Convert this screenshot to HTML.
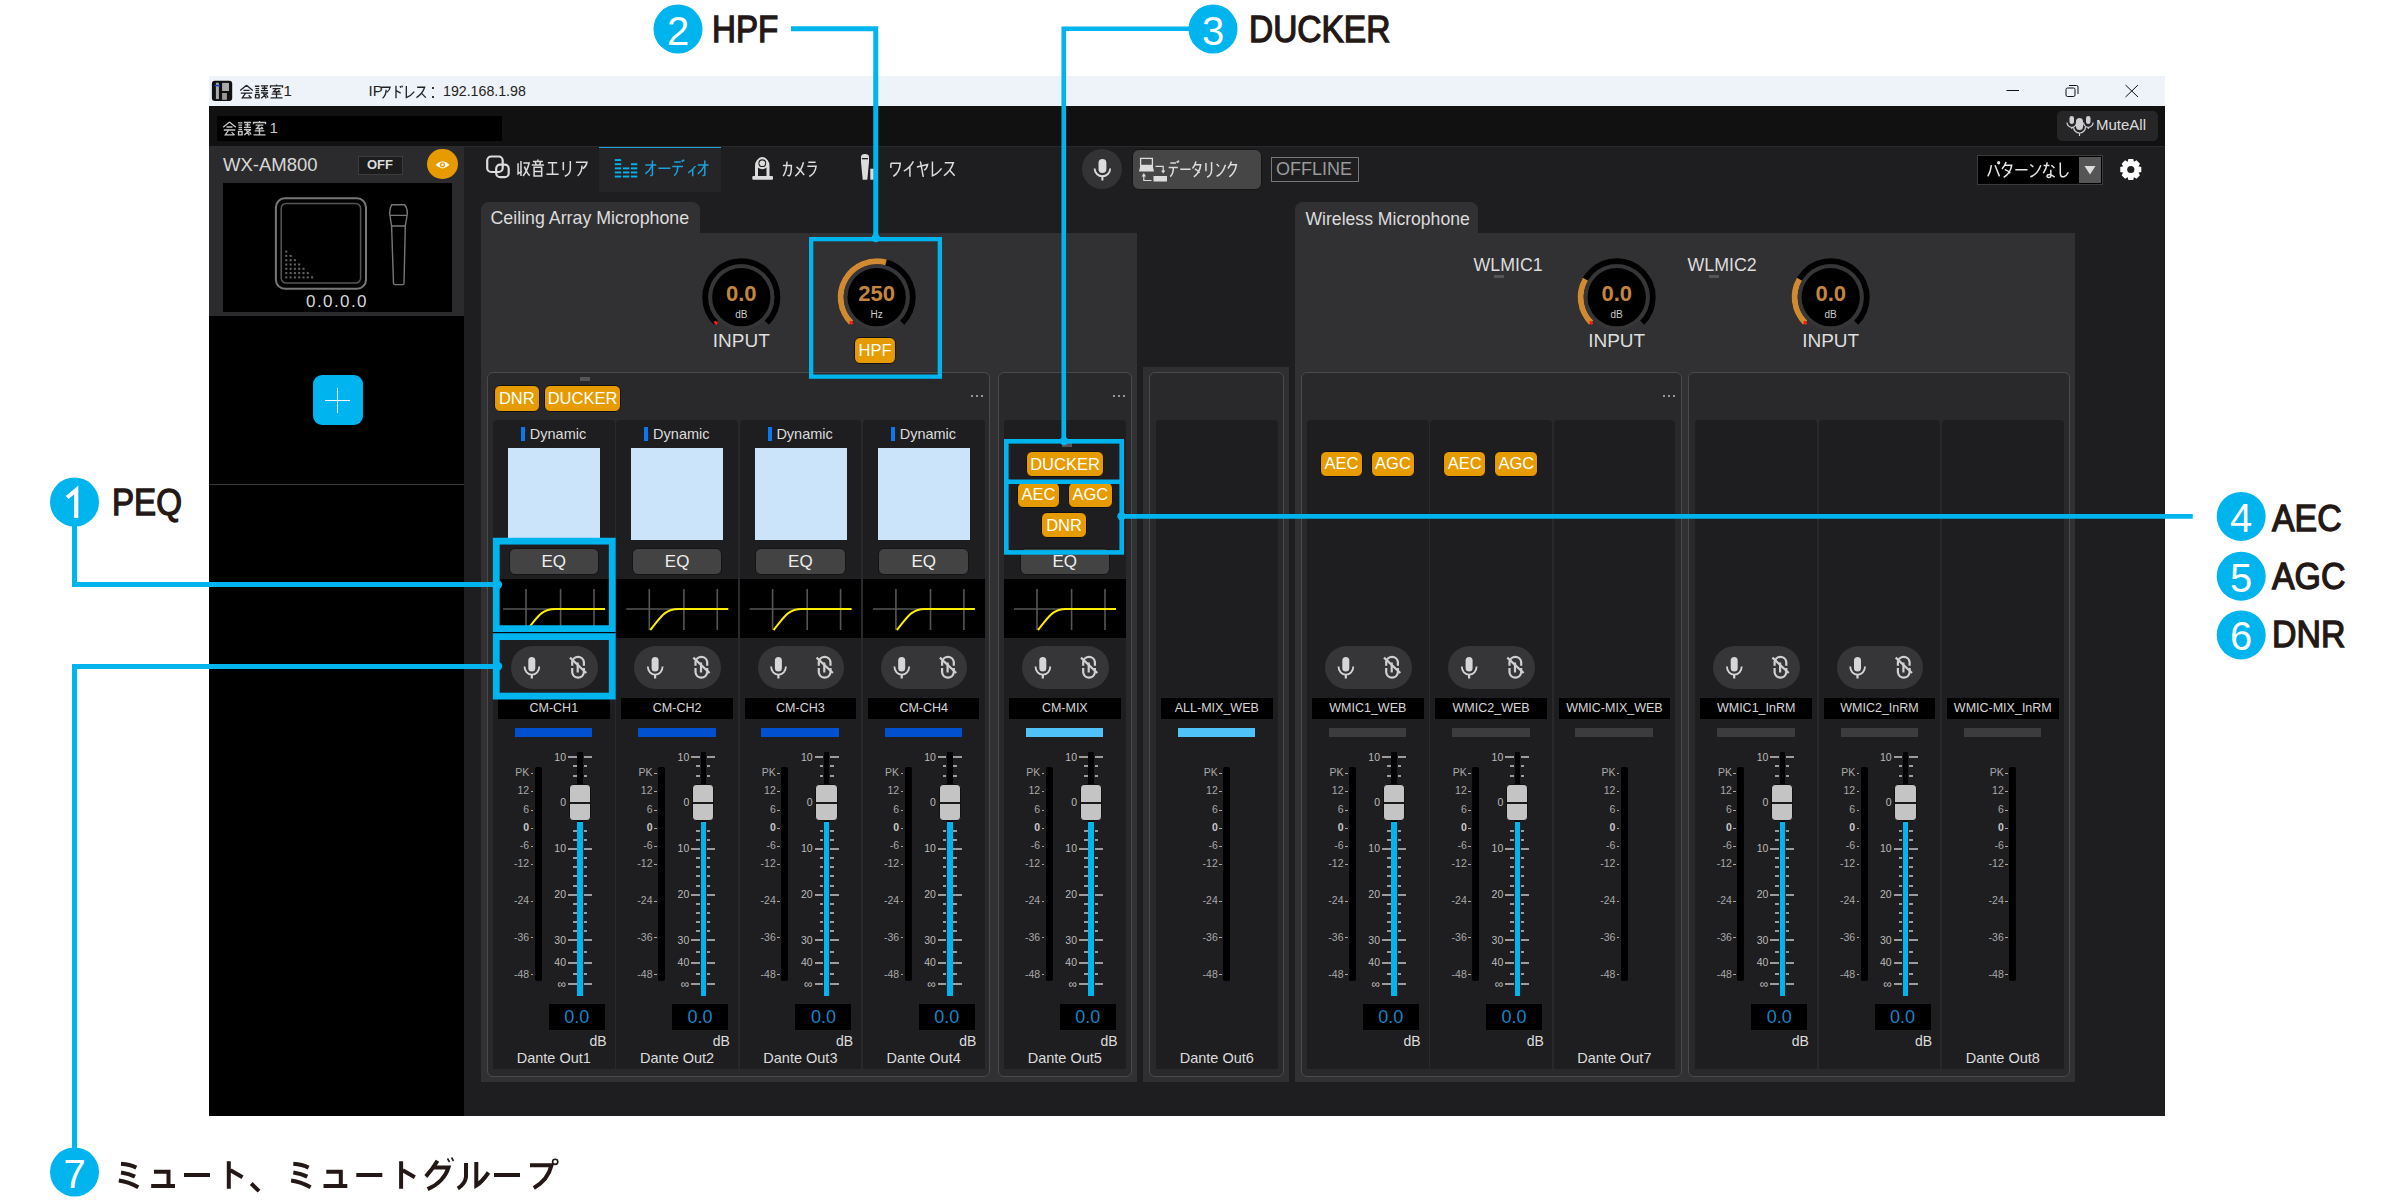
<!DOCTYPE html><html><head><meta charset="utf-8"><title>mixer</title><style>
*{margin:0;padding:0;box-sizing:border-box}
html,body{width:2400px;height:1200px;overflow:hidden;background:#fff}
body{position:relative;font-family:"Liberation Sans",sans-serif}
div{position:absolute}
.t{white-space:nowrap}
svg{position:absolute;left:0;top:0;overflow:visible}
.ob{background:#e69b00;border:1px solid #111;border-radius:6px;color:#fff;text-align:center;font-size:16.5px}
</style></head><body>
<div style="left:209px;top:76px;width:1956px;height:30px;background:#eef2f9"></div>
<div style="left:209px;top:106px;width:1956px;height:40px;background:#111112"></div>
<div style="left:217px;top:115.5px;width:285px;height:25.5px;background:#000"></div>
<div style="left:209px;top:146px;width:255px;height:970px;background:#000"></div>
<div style="left:209px;top:146px;width:255px;height:170px;background:#2b2b2d"></div>
<div style="left:223px;top:182.5px;width:229px;height:129.5px;background:#000"></div>
<div style="left:209px;top:484px;width:255px;height:1px;background:#3a3a3a"></div>
<div style="left:464px;top:146px;width:1701px;height:970px;background:#1e1e20"></div>
<div style="left:464px;top:146px;width:1701px;height:1px;background:#29292b"></div>
<svg width="2400" height="1200" viewBox="0 0 2400 1200"><g fill="none" stroke="#222" stroke-width="1.3" stroke-linecap="butt" stroke-linejoin="miter"><path transform="translate(239.00 84.50) scale(0.1500 0.1450)" d="M50 6 L8 42 M50 6 L92 42 M30 40 H70 M12 60 H88 M44 60 L22 92 H82 M64 74 L84 94" vector-effect="non-scaling-stroke"/><path transform="translate(254.00 84.50) scale(0.1500 0.1450)" d="M6 12 H36 M10 28 H34 M10 42 H34 M10 56 H34 M10 70 H34 V92 H10 Z M46 10 H94 M52 26 H88 M46 42 H94 M70 10 V46 M46 58 H94 M58 52 L82 96 M90 58 L48 94 M84 74 L94 90" vector-effect="non-scaling-stroke"/><path transform="translate(269.00 84.50) scale(0.1500 0.1450)" d="M50 0 V10 M10 22 V10 H90 V22 M24 28 H76 M52 28 L30 50 H72 M62 40 L74 52 M18 66 H82 M50 54 V90 M10 92 H90" vector-effect="non-scaling-stroke"/></g></svg>
<div class="t" style="left:283.5px;top:82.42px;font-size:15px;line-height:18.75px;color:#222;">1</div>
<div class="t" style="left:368.6px;top:82.42px;font-size:15px;line-height:18.75px;color:#222;">IP</div>
<svg width="2400" height="1200" viewBox="0 0 2400 1200"><g fill="none" stroke="#222" stroke-width="1.3" stroke-linecap="butt" stroke-linejoin="miter"><path transform="translate(380.00 85.00) scale(0.1175 0.1400)" d="M10 16 H86 Q82 38 58 52 M52 34 Q52 74 22 94" vector-effect="non-scaling-stroke"/><path transform="translate(391.75 85.00) scale(0.1175 0.1400)" d="M36 6 V94 M38 40 L76 58 M70 8 L78 20 M84 4 L92 16" vector-effect="non-scaling-stroke"/><path transform="translate(403.50 85.00) scale(0.1175 0.1400)" d="M24 8 V90 Q62 80 92 48" vector-effect="non-scaling-stroke"/><path transform="translate(415.25 85.00) scale(0.1175 0.1400)" d="M16 16 H80 Q62 62 10 90 M50 56 L90 90" vector-effect="non-scaling-stroke"/></g></svg>
<div style="left:431.5px;top:87px;width:2.2px;height:2.2px;background:#333"></div>
<div style="left:431.5px;top:95.5px;width:2.2px;height:2.2px;background:#333"></div>
<div class="t" style="left:443px;top:82.92px;font-size:14.2px;line-height:17.75px;color:#222;">192.168.1.98</div>
<svg width="2400" height="1200" viewBox="0 0 2400 1200"><g fill="none" stroke="#c8c8c8" stroke-width="1.3" stroke-linecap="butt" stroke-linejoin="miter"><path transform="translate(222.00 121.00) scale(0.1500 0.1500)" d="M50 6 L8 42 M50 6 L92 42 M30 40 H70 M12 60 H88 M44 60 L22 92 H82 M64 74 L84 94" vector-effect="non-scaling-stroke"/><path transform="translate(237.00 121.00) scale(0.1500 0.1500)" d="M6 12 H36 M10 28 H34 M10 42 H34 M10 56 H34 M10 70 H34 V92 H10 Z M46 10 H94 M52 26 H88 M46 42 H94 M70 10 V46 M46 58 H94 M58 52 L82 96 M90 58 L48 94 M84 74 L94 90" vector-effect="non-scaling-stroke"/><path transform="translate(252.00 121.00) scale(0.1500 0.1500)" d="M50 0 V10 M10 22 V10 H90 V22 M24 28 H76 M52 28 L30 50 H72 M62 40 L74 52 M18 66 H82 M50 54 V90 M10 92 H90" vector-effect="non-scaling-stroke"/></g></svg>
<div class="t" style="left:269.5px;top:119.12px;font-size:15px;line-height:18.75px;color:#c8c8c8;">1</div>
<svg width="2400" height="1200" viewBox="0 0 2400 1200"><rect x="211.9" y="80.8" width="20.3" height="20.2" rx="3" fill="#111"/><rect x="215.9" y="82.8" width="3" height="16.3" fill="#aaa"/><rect x="214.5" y="84.8" width="5.5" height="1.5" fill="#1040c0"/><rect x="222.1" y="82.9" width="6.9" height="8.1" fill="#aaa"/><rect x="222.1" y="93" width="4.8" height="6.8" fill="#999"/></svg>
<svg width="2400" height="1200" viewBox="0 0 2400 1200"><g fill="none" stroke="#111" stroke-width="1"><path d="M2006.5 90.5 H2019"/><rect x="2066" y="88" width="9" height="8.5" rx="1.5"/><path d="M2069 85.5 H2076.5 Q2078 85.5 2078 87 V94"/><path d="M2125.5 85 L2138 97 M2138 85 L2125.5 97"/></g></svg>
<div class="t" style="left:223px;top:153.44px;font-size:18.5px;line-height:23.12px;color:#d8d8d8;">WX-AM800</div>
<div style="left:357.5px;top:155.5px;width:45px;height:19.5px;background:#1c1c1c;border:1px solid #3c3c3c"><div class="t" style="left:0px;top:0.88px;font-size:13px;line-height:16.25px;color:#ddd;font-weight:bold;width:43px;text-align:center">OFF</div></div>
<div style="left:427.4px;top:148.9px;width:30.6px;height:30.6px;background:#e69b00;border-radius:50%"></div>
<div class="t" style="left:277.00px;top:291.38px;width:120px;text-align:center;font-size:17px;line-height:21.25px;color:#d8d8d8;letter-spacing:1.4px">0.0.0.0</div>
<svg width="2400" height="1200" viewBox="0 0 2400 1200"><path d="M435.6 164.8 Q442.5 157.5 449.5 164.8 Q442.5 172 435.6 164.8 Z" fill="#fff"/><circle cx="442.5" cy="164.8" r="2.6" fill="#e69b00"/><circle cx="442.5" cy="164.8" r="1.2" fill="#fff"/><rect x="275.9" y="198.3" width="90.1" height="90.5" rx="9" fill="none" stroke="#777" stroke-width="2"/><rect x="281.2" y="203.4" width="79.4" height="79.7" rx="5" fill="none" stroke="#555" stroke-width="1.5"/><rect x="285.30" y="250.60" width="2" height="2" fill="#666"/><rect x="285.30" y="254.90" width="2" height="2" fill="#666"/><rect x="289.60" y="254.90" width="2" height="2" fill="#666"/><rect x="285.30" y="259.20" width="2" height="2" fill="#666"/><rect x="289.60" y="259.20" width="2" height="2" fill="#666"/><rect x="293.90" y="259.20" width="2" height="2" fill="#666"/><rect x="285.30" y="263.50" width="2" height="2" fill="#666"/><rect x="289.60" y="263.50" width="2" height="2" fill="#666"/><rect x="293.90" y="263.50" width="2" height="2" fill="#666"/><rect x="298.20" y="263.50" width="2" height="2" fill="#666"/><rect x="285.30" y="267.80" width="2" height="2" fill="#666"/><rect x="289.60" y="267.80" width="2" height="2" fill="#666"/><rect x="293.90" y="267.80" width="2" height="2" fill="#666"/><rect x="298.20" y="267.80" width="2" height="2" fill="#666"/><rect x="302.50" y="267.80" width="2" height="2" fill="#666"/><rect x="285.30" y="272.10" width="2" height="2" fill="#666"/><rect x="289.60" y="272.10" width="2" height="2" fill="#666"/><rect x="293.90" y="272.10" width="2" height="2" fill="#666"/><rect x="298.20" y="272.10" width="2" height="2" fill="#666"/><rect x="302.50" y="272.10" width="2" height="2" fill="#666"/><rect x="306.80" y="272.10" width="2" height="2" fill="#666"/><rect x="285.30" y="276.40" width="2" height="2" fill="#666"/><rect x="289.60" y="276.40" width="2" height="2" fill="#666"/><rect x="293.90" y="276.40" width="2" height="2" fill="#666"/><rect x="298.20" y="276.40" width="2" height="2" fill="#666"/><rect x="302.50" y="276.40" width="2" height="2" fill="#666"/><rect x="306.80" y="276.40" width="2" height="2" fill="#666"/><rect x="311.10" y="276.40" width="2" height="2" fill="#666"/><path d="M391.8 204.7 H404.7 Q407.5 208 407.3 214 L405.3 226 L404 283.5 Q404 284.6 402.6 284.6 H394.9 Q393.5 284.6 393.5 283.5 L391.6 226 L389.7 214 Q389.5 208 391.8 204.7 Z M390.5 215.4 H406.5 M391.6 226 H405.3" fill="none" stroke="#777" stroke-width="1.4"/></svg>
<div style="left:312.5px;top:375px;width:50px;height:50px;background:#00b4f0;border-radius:9px"></div>
<div style="left:337px;top:387.5px;width:1.2px;height:25px;background:#fff"></div>
<div style="left:325px;top:399.5px;width:25px;height:1.2px;background:#fff"></div>
<div style="left:2056.7px;top:110.7px;width:101.3px;height:30px;background:#262628;border-radius:5px"></div>
<div class="t" style="left:2096px;top:116.12px;font-size:15px;line-height:18.75px;color:#ddd;">MuteAll</div>
<div style="left:598.7px;top:146.5px;width:122px;height:45.5px;background:#252527;border-top:1px solid #1a9fdc"></div>
<svg width="2400" height="1200" viewBox="0 0 2400 1200"><g fill="none" stroke="#dcdcdc" stroke-width="1.5" stroke-linecap="butt" stroke-linejoin="miter"><path transform="translate(516.00 159.50) scale(0.1460 0.1750)" d="M14 22 V82 L40 66 M34 8 V94 M50 20 H90 Q76 66 48 94 M58 40 Q72 76 94 92" vector-effect="non-scaling-stroke"/><path transform="translate(530.60 159.50) scale(0.1460 0.1750)" d="M50 0 V10 M16 12 H84 M32 16 L38 30 M68 16 L62 30 M8 32 H92 M24 44 V94 H76 V44 Z M24 68 H76" vector-effect="non-scaling-stroke"/><path transform="translate(545.20 159.50) scale(0.1460 0.1750)" d="M18 18 H82 M50 18 V84 M8 84 H92" vector-effect="non-scaling-stroke"/><path transform="translate(559.80 159.50) scale(0.1460 0.1750)" d="M24 14 V62 M72 8 V56 Q70 86 34 96" vector-effect="non-scaling-stroke"/><path transform="translate(574.40 159.50) scale(0.1460 0.1750)" d="M10 16 H86 Q82 38 58 52 M52 34 Q52 74 22 94" vector-effect="non-scaling-stroke"/></g></svg>
<svg width="2400" height="1200" viewBox="0 0 2400 1200"><g fill="none" stroke="#1ea0dc" stroke-width="1.5" stroke-linecap="butt" stroke-linejoin="miter"><path transform="translate(644.00 159.50) scale(0.1361 0.1750)" d="M10 32 H90 M62 6 V84 Q62 94 46 90 M60 34 Q42 64 10 82" vector-effect="non-scaling-stroke"/><path transform="translate(657.61 159.50) scale(0.1361 0.1750)" d="M6 50 H94" vector-effect="non-scaling-stroke"/><path transform="translate(671.22 159.50) scale(0.1361 0.1750)" d="M22 14 H70 M8 40 H86 M48 40 Q48 76 22 92 M78 4 L84 14 M88 0 L94 10" vector-effect="non-scaling-stroke"/><path transform="translate(684.82 159.50) scale(0.1361 0.1750)" d="M78 38 Q58 62 24 76 M58 56 V96" vector-effect="non-scaling-stroke"/><path transform="translate(696.39 159.50) scale(0.1361 0.1750)" d="M10 32 H90 M62 6 V84 Q62 94 46 90 M60 34 Q42 64 10 82" vector-effect="non-scaling-stroke"/></g></svg>
<svg width="2400" height="1200" viewBox="0 0 2400 1200"><g fill="none" stroke="#dcdcdc" stroke-width="1.5" stroke-linecap="butt" stroke-linejoin="miter"><path transform="translate(781.70 160.50) scale(0.1210 0.1700)" d="M10 30 H80 Q80 82 64 90 Q56 90 48 86 M44 6 Q42 62 12 92" vector-effect="non-scaling-stroke"/><path transform="translate(793.80 160.50) scale(0.1210 0.1700)" d="M80 10 Q60 65 12 92 M22 38 Q60 58 86 86" vector-effect="non-scaling-stroke"/><path transform="translate(805.90 160.50) scale(0.1210 0.1700)" d="M20 10 H80 M12 34 H84 Q78 76 28 94" vector-effect="non-scaling-stroke"/></g></svg>
<svg width="2400" height="1200" viewBox="0 0 2400 1200"><g fill="none" stroke="#dcdcdc" stroke-width="1.5" stroke-linecap="butt" stroke-linejoin="miter"><path transform="translate(889.00 160.00) scale(0.1340 0.1750)" d="M14 18 V46 M14 18 H84 Q80 70 32 94" vector-effect="non-scaling-stroke"/><path transform="translate(902.40 160.00) scale(0.1340 0.1750)" d="M82 8 Q58 44 10 64 M56 40 V96" vector-effect="non-scaling-stroke"/><path transform="translate(915.80 160.00) scale(0.1340 0.1750)" d="M8 40 L88 26 Q82 50 62 58 M34 8 L56 96" vector-effect="non-scaling-stroke"/><path transform="translate(929.20 160.00) scale(0.1340 0.1750)" d="M24 8 V90 Q62 80 92 48" vector-effect="non-scaling-stroke"/><path transform="translate(942.60 160.00) scale(0.1340 0.1750)" d="M16 16 H80 Q62 62 10 90 M50 56 L90 90" vector-effect="non-scaling-stroke"/></g></svg>
<div style="left:1082px;top:149px;width:40px;height:40px;background:#333335;border-radius:50%"></div>
<div style="left:1131.8px;top:148.9px;width:130.5px;height:41.3px;background:#464646;border:1px solid #151515;border-radius:7px"></div>
<svg width="2400" height="1200" viewBox="0 0 2400 1200"><g fill="none" stroke="#dcdcdc" stroke-width="1.5" stroke-linecap="butt" stroke-linejoin="miter"><path transform="translate(1167.70 160.50) scale(0.1180 0.1750)" d="M22 14 H70 M8 40 H86 M48 40 Q48 76 22 92 M78 4 L84 14 M88 0 L94 10" vector-effect="non-scaling-stroke"/><path transform="translate(1179.50 160.50) scale(0.1180 0.1750)" d="M6 50 H94" vector-effect="non-scaling-stroke"/><path transform="translate(1191.30 160.50) scale(0.1180 0.1750)" d="M40 6 Q30 30 10 46 M32 24 H80 Q72 70 22 94 M30 48 Q55 56 70 70" vector-effect="non-scaling-stroke"/><path transform="translate(1203.10 160.50) scale(0.1180 0.1750)" d="M24 14 V62 M72 8 V56 Q70 86 34 96" vector-effect="non-scaling-stroke"/><path transform="translate(1214.90 160.50) scale(0.1180 0.1750)" d="M14 20 L36 34 M14 90 Q62 80 90 24" vector-effect="non-scaling-stroke"/><path transform="translate(1226.70 160.50) scale(0.1180 0.1750)" d="M40 6 Q30 30 10 46 M32 24 H82 Q72 70 22 94" vector-effect="non-scaling-stroke"/></g></svg>
<div style="left:1270.5px;top:157px;width:88px;height:24.5px;border:1.5px solid #777"></div>
<div class="t" style="left:1264.00px;top:158.25px;width:100px;text-align:center;font-size:18px;line-height:22.5px;color:#9a9a9a;">OFFLINE</div>
<div style="left:1976.7px;top:155.3px;width:126.3px;height:29.4px;background:#000;border:1px solid #3a3a3a"></div>
<div style="left:2079px;top:157px;width:22px;height:26px;background:#555"></div>
<svg width="2400" height="1200" viewBox="0 0 2400 1200"><g fill="none" stroke="#e6e6e6" stroke-width="1.5" stroke-linecap="butt" stroke-linejoin="miter"><path transform="translate(1986.70 161.00) scale(0.1388 0.1750)" d="M34 24 Q28 62 8 88 M60 24 Q76 56 92 88 M86 10 m-6 0 a6 6 0 1 0 12 0 a6 6 0 1 0 -12 0" vector-effect="non-scaling-stroke"/><path transform="translate(2000.58 161.00) scale(0.1388 0.1750)" d="M40 6 Q30 30 10 46 M32 24 H80 Q72 70 22 94 M30 48 Q55 56 70 70" vector-effect="non-scaling-stroke"/><path transform="translate(2014.47 161.00) scale(0.1388 0.1750)" d="M6 50 H94" vector-effect="non-scaling-stroke"/><path transform="translate(2028.35 161.00) scale(0.1388 0.1750)" d="M14 20 L36 34 M14 90 Q62 80 90 24" vector-effect="non-scaling-stroke"/><path transform="translate(2042.23 161.00) scale(0.1388 0.1750)" d="M10 26 H52 M36 8 Q30 46 8 70 M66 24 L88 40 M62 50 V84 Q62 96 44 94 Q28 90 38 80 Q58 72 90 92" vector-effect="non-scaling-stroke"/><path transform="translate(2056.12 161.00) scale(0.1388 0.1750)" d="M30 8 V72 Q32 94 56 90 Q76 84 88 64" vector-effect="non-scaling-stroke"/></g></svg>
<svg width="2400" height="1200" viewBox="0 0 2400 1200"><g fill="none" stroke="#dcdcdc" stroke-width="2.2"><rect x="487.2" y="156.5" width="15.5" height="15.5" rx="4"/><rect x="496.2" y="164.7" width="12.5" height="12.5" rx="4"/></g><rect x="614.8" y="159.1" width="6.3" height="1.9" fill="#00b4ee"/><rect x="614.8" y="163.25" width="6.3" height="1.9" fill="#00b4ee"/><rect x="614.8" y="167.4" width="6.3" height="1.9" fill="#00b4ee"/><rect x="614.8" y="171.5" width="6.3" height="1.9" fill="#00b4ee"/><rect x="614.8" y="175.6" width="6.3" height="1.9" fill="#00b4ee"/><rect x="623" y="167.4" width="6.3" height="1.9" fill="#00b4ee"/><rect x="623" y="171.5" width="6.3" height="1.9" fill="#00b4ee"/><rect x="623" y="175.6" width="6.3" height="1.9" fill="#00b4ee"/><rect x="631" y="163.25" width="6.3" height="1.9" fill="#00b4ee"/><rect x="631" y="167.4" width="6.3" height="1.9" fill="#00b4ee"/><rect x="631" y="171.5" width="6.3" height="1.9" fill="#00b4ee"/><rect x="631" y="175.6" width="6.3" height="1.9" fill="#00b4ee"/><g fill="none" stroke="#dcdcdc"><path d="M756.5 176 V166 Q756.5 160 762.3 160 Q768 160 768 166 V176" stroke-width="3"/><circle cx="762.3" cy="163.2" r="5" fill="#1e1e20" stroke-width="2.2"/></g><circle cx="762.3" cy="163.2" r="2.8" fill="#dcdcdc"/><rect x="752.3" y="176" width="20.7" height="3.7" rx="1" fill="#dcdcdc"/><path d="M861 157 Q861 154 865 154 Q869 154 869 157 V162 L867.3 179.7 H862.7 L861 162 Z" fill="#dcdcdc"/><rect x="862" y="158" width="6" height="1.3" fill="#1e1e20"/><rect x="870.3" y="168.7" width="4" height="11" fill="#dcdcdc"/><rect x="1098.5" y="158.9" width="7.9" height="14" rx="3.95" fill="#dcdcdc"/><path d="M1094.6 168.5 a7.8 7.8 0 0 0 15.6 0" fill="none" stroke="#dcdcdc" stroke-width="1.8"/><path d="M1102.4 176.3 V180.5" stroke="#dcdcdc" stroke-width="2"/><rect x="1140.6" y="158.4" width="11.8" height="7" fill="none" stroke="#dcdcdc" stroke-width="1.3"/><path d="M1139 171.5 L1140.3 165.5 H1152.7 L1154 171.5 Z" fill="#dcdcdc"/><path d="M1155.5 166.3 H1163.2 V171" fill="none" stroke="#dcdcdc" stroke-width="1.2"/><path d="M1161 170.5 L1163.2 173.5 L1165.4 170.5 Z" fill="#dcdcdc"/><path d="M1143.8 175.5 V180.5 H1151.5" fill="none" stroke="#dcdcdc" stroke-width="1.2"/><path d="M1141.6 176.5 L1143.8 173 L1146 176.5 Z" fill="#dcdcdc"/><rect x="1153.5" y="176" width="13.5" height="5.5" fill="#dcdcdc"/><polygon points="2127.55,162.19 2128.37,158.98 2133.23,158.98 2134.05,162.19 2133.67,162.03 2136.52,160.34 2139.96,163.78 2138.27,166.63 2138.11,166.25 2141.32,167.07 2141.32,171.93 2138.11,172.75 2138.27,172.37 2139.96,175.22 2136.52,178.66 2133.67,176.97 2134.05,176.81 2133.23,180.02 2128.37,180.02 2127.55,176.81 2127.93,176.97 2125.08,178.66 2121.64,175.22 2123.33,172.37 2123.49,172.75 2120.28,171.93 2120.28,167.07 2123.49,166.25 2123.33,166.63 2121.64,163.78 2125.08,160.34 2127.93,162.03" fill="#fff"/><circle cx="2130.8" cy="169.5" r="3.6" fill="#1e1e20"/><path d="M2084.5 166 H2095.5 L2090 174.5 Z" fill="#ddd"/><g fill="#cfcfcf"><rect x="2069.5" y="116" width="4.5" height="8" rx="2.25"/><rect x="2086" y="116" width="4.5" height="8" rx="2.25"/><rect x="2076" y="118" width="7" height="12" rx="3.5"/></g><g fill="none" stroke="#cfcfcf" stroke-width="1.2"><path d="M2067 122.5 a4.8 4.8 0 0 0 9.6 0 M2083.5 122.5 a4.8 4.8 0 0 0 9.6 0 M2073.5 127 a6 6 0 0 0 12 0"/><path d="M2079.5 133 V136 M2071.8 127.3 V129 M2088.3 127.3 V129"/></g></svg>
<div style="left:480.6px;top:202px;width:219px;height:40px;background:#313133;border-radius:8px 8px 0 0"></div>
<div style="left:480.6px;top:233px;width:656.4px;height:848.5px;background:#313133"></div>
<div class="t" style="left:490.5px;top:207.38px;font-size:17.8px;line-height:22.25px;color:#dcdcdc;">Ceiling Array Microphone</div>
<div style="left:1295px;top:202px;width:183px;height:40px;background:#313133;border-radius:8px 8px 0 0"></div>
<div style="left:1295px;top:233px;width:779.6px;height:848.5px;background:#313133"></div>
<div class="t" style="left:1305.5px;top:207.50px;font-size:17.6px;line-height:22.0px;color:#dcdcdc;">Wireless Microphone</div>
<div style="left:1143px;top:367px;width:146px;height:714.5px;background:#2f2f31"></div>
<div style="left:487px;top:371.8px;width:502.5px;height:704.8px;background:#29292b;border:1px solid #4a4a4c;border-radius:6px"></div>
<div style="left:970.5px;top:395px;width:2.2px;height:2.2px;background:#bbb;border-radius:50%"></div>
<div style="left:975.5px;top:395px;width:2.2px;height:2.2px;background:#bbb;border-radius:50%"></div>
<div style="left:980.5px;top:395px;width:2.2px;height:2.2px;background:#bbb;border-radius:50%"></div>
<div style="left:579.5px;top:376.7px;width:10px;height:4px;background:#555"></div>
<div style="left:997.5px;top:371.8px;width:134.20000000000005px;height:704.8px;background:#29292b;border:1px solid #4a4a4c;border-radius:6px"></div>
<div style="left:1112.7px;top:395px;width:2.2px;height:2.2px;background:#bbb;border-radius:50%"></div>
<div style="left:1117.7px;top:395px;width:2.2px;height:2.2px;background:#bbb;border-radius:50%"></div>
<div style="left:1122.7px;top:395px;width:2.2px;height:2.2px;background:#bbb;border-radius:50%"></div>
<div style="left:1149px;top:371.8px;width:134.70000000000005px;height:704.8px;background:#29292b;border:1px solid #4a4a4c;border-radius:6px"></div>
<div style="left:1300.6px;top:371.8px;width:381.0px;height:704.8px;background:#29292b;border:1px solid #4a4a4c;border-radius:6px"></div>
<div style="left:1662.6px;top:395px;width:2.2px;height:2.2px;background:#bbb;border-radius:50%"></div>
<div style="left:1667.6px;top:395px;width:2.2px;height:2.2px;background:#bbb;border-radius:50%"></div>
<div style="left:1672.6px;top:395px;width:2.2px;height:2.2px;background:#bbb;border-radius:50%"></div>
<div style="left:1688.4px;top:371.8px;width:381.5999999999999px;height:704.8px;background:#29292b;border:1px solid #4a4a4c;border-radius:6px"></div>
<div class="ob" style="left:494px;top:385px;width:45.5px;height:27px;"><div class="t" style="left:0px;top:2.19px;font-size:16.5px;line-height:20.62px;color:#fff;width:43.5px;text-align:center">DNR</div></div>
<div class="ob" style="left:544px;top:385px;width:77px;height:27px;"><div class="t" style="left:0px;top:2.19px;font-size:16.5px;line-height:20.62px;color:#fff;width:75px;text-align:center">DUCKER</div></div>
<div style="left:493px;top:420px;width:121.7px;height:648.5px;background:#1e1e20;border-radius:4px 4px 0 0"></div>
<div style="left:521px;top:427px;width:4px;height:14px;background:#0a78f0"></div>
<div class="t" style="left:529.8px;top:424.94px;font-size:14.5px;line-height:18.12px;color:#dcdcdc;">Dynamic</div>
<div style="left:508px;top:448px;width:92px;height:92px;background:#cce4fa"></div>
<div style="left:508.5px;top:547.7px;width:90.5px;height:27.1px;background:#434343;border:1.3px solid #141414;border-radius:6px"></div>
<div class="t" style="left:513.80px;top:550.88px;width:80px;text-align:center;font-size:17px;line-height:21.25px;color:#eee;">EQ</div>
<div style="left:493px;top:579px;width:121.7px;height:59px;background:#000"></div>
<svg width="2400" height="1200" viewBox="0 0 2400 1200"><g stroke="#555" stroke-width="1.6"><path d="M526 589 V630 M560.6 589 V630 M594 589 V630 M503 609 H604"/></g><path d="M527 630 C537 618 541 609 555 609 H605" fill="none" stroke="#ffee00" stroke-width="2"/></svg>
<div style="left:511px;top:646px;width:86.5px;height:42.75px;background:#363638;border-radius:22px"></div>
<svg width="2400" height="1200" viewBox="0 0 2400 1200"><rect x="528.3" y="656.9" width="7" height="14.5" rx="3.5" fill="#d6d6d6"/><path d="M524.5 666.5 A7.4 8.2 0 0 0 539.3 666.5" fill="none" stroke="#d6d6d6" stroke-width="1.8"/><path d="M531.8 674.3 V678.5" stroke="#d6d6d6" stroke-width="2.2"/></svg>
<svg width="2400" height="1200" viewBox="0 0 2400 1200"><g fill="none" stroke="#d0d0d0" stroke-width="2.2"><path d="M572.2 665.7 V662 A5.9 5.9 0 0 1 583.9 662 V665.7"/><path d="M572.2 668 V672.4 A5.9 5.9 0 0 0 583.9 672.4 V668"/><path d="M577.7 662.5 V672.5"/><path d="M570 657.6 L586.3 673"/></g></svg>
<div style="left:498px;top:697.7px;width:111.6px;height:21.3px;background:#000"></div>
<div class="t" style="left:498.30px;top:700.59px;width:111px;text-align:center;font-size:12.5px;line-height:15.62px;color:#d8d8d8;">CM-CH1</div>
<div style="left:514.8px;top:728px;width:77.7px;height:8.7px;background:#0050d0"></div>
<div style="left:534.7px;top:767.3px;width:7px;height:213.3px;background:#000;border-radius:2px"></div>
<div class="t" style="left:489.20px;top:766.14px;width:40px;text-align:right;font-size:10.5px;line-height:13.12px;color:#a8a8a8;">PK</div>
<div style="left:530.7px;top:772.5px;width:2.5px;height:1.3px;background:#a8a8a8"></div>
<div class="t" style="left:489.20px;top:784.44px;width:40px;text-align:right;font-size:10.5px;line-height:13.12px;color:#a8a8a8;">12</div>
<div style="left:530.7px;top:790.5px;width:2.5px;height:1.3px;background:#a8a8a8"></div>
<div class="t" style="left:489.20px;top:802.94px;width:40px;text-align:right;font-size:10.5px;line-height:13.12px;color:#a8a8a8;">6</div>
<div style="left:530.7px;top:809.5px;width:2.5px;height:1.3px;background:#a8a8a8"></div>
<div class="t" style="left:489.20px;top:820.94px;width:40px;text-align:right;font-size:10.5px;line-height:13.12px;color:#c8c8c8;font-weight:bold">0</div>
<div style="left:530.7px;top:827.5px;width:2.5px;height:1.3px;background:#a8a8a8"></div>
<div class="t" style="left:489.20px;top:839.44px;width:40px;text-align:right;font-size:10.5px;line-height:13.12px;color:#a8a8a8;">-6</div>
<div style="left:530.7px;top:845.5px;width:2.5px;height:1.3px;background:#a8a8a8"></div>
<div class="t" style="left:489.20px;top:857.44px;width:40px;text-align:right;font-size:10.5px;line-height:13.12px;color:#a8a8a8;">-12</div>
<div style="left:530.7px;top:863.5px;width:2.5px;height:1.3px;background:#a8a8a8"></div>
<div class="t" style="left:489.20px;top:894.44px;width:40px;text-align:right;font-size:10.5px;line-height:13.12px;color:#a8a8a8;">-24</div>
<div style="left:530.7px;top:900.5px;width:2.5px;height:1.3px;background:#a8a8a8"></div>
<div class="t" style="left:489.20px;top:930.84px;width:40px;text-align:right;font-size:10.5px;line-height:13.12px;color:#a8a8a8;">-36</div>
<div style="left:530.7px;top:936.5px;width:2.5px;height:1.3px;background:#a8a8a8"></div>
<div class="t" style="left:489.20px;top:967.94px;width:40px;text-align:right;font-size:10.5px;line-height:13.12px;color:#a8a8a8;">-48</div>
<div style="left:530.7px;top:973.5px;width:2.5px;height:1.3px;background:#a8a8a8"></div>
<div style="left:568px;top:756px;width:8.5px;height:1.8px;background:#9c9c9c"></div>
<div style="left:583.5px;top:756px;width:8.5px;height:1.8px;background:#9c9c9c"></div>
<div class="t" style="left:536.00px;top:750.74px;width:30px;text-align:right;font-size:10.5px;line-height:13.12px;color:#bbb;">10</div>
<div class="t" style="left:536.00px;top:796.44px;width:30px;text-align:right;font-size:10.5px;line-height:13.12px;color:#bbb;">0</div>
<div style="left:568px;top:848px;width:8.5px;height:1.8px;background:#9c9c9c"></div>
<div style="left:583.5px;top:848px;width:8.5px;height:1.8px;background:#9c9c9c"></div>
<div class="t" style="left:536.00px;top:842.44px;width:30px;text-align:right;font-size:10.5px;line-height:13.12px;color:#bbb;">10</div>
<div style="left:568px;top:894px;width:8.5px;height:1.8px;background:#9c9c9c"></div>
<div style="left:583.5px;top:894px;width:8.5px;height:1.8px;background:#9c9c9c"></div>
<div class="t" style="left:536.00px;top:888.14px;width:30px;text-align:right;font-size:10.5px;line-height:13.12px;color:#bbb;">20</div>
<div style="left:568px;top:939px;width:8.5px;height:1.8px;background:#9c9c9c"></div>
<div style="left:583.5px;top:939px;width:8.5px;height:1.8px;background:#9c9c9c"></div>
<div class="t" style="left:536.00px;top:933.84px;width:30px;text-align:right;font-size:10.5px;line-height:13.12px;color:#bbb;">30</div>
<div style="left:568px;top:962px;width:8.5px;height:1.8px;background:#9c9c9c"></div>
<div style="left:583.5px;top:962px;width:8.5px;height:1.8px;background:#9c9c9c"></div>
<div class="t" style="left:536.00px;top:956.24px;width:30px;text-align:right;font-size:10.5px;line-height:13.12px;color:#bbb;">40</div>
<div style="left:568px;top:983px;width:8.5px;height:1.8px;background:#9c9c9c"></div>
<div style="left:583.5px;top:983px;width:8.5px;height:1.8px;background:#9c9c9c"></div>
<div class="t" style="left:536.00px;top:976.80px;width:30px;text-align:right;font-size:12px;line-height:15.0px;color:#bbb;">&#8734;</div>
<div style="left:573px;top:765px;width:3.5px;height:1.8px;background:#9c9c9c"></div>
<div style="left:583.5px;top:765px;width:3.5px;height:1.8px;background:#9c9c9c"></div>
<div style="left:573px;top:857px;width:3.5px;height:1.8px;background:#9c9c9c"></div>
<div style="left:583.5px;top:857px;width:3.5px;height:1.8px;background:#9c9c9c"></div>
<div style="left:573px;top:903px;width:3.5px;height:1.8px;background:#9c9c9c"></div>
<div style="left:583.5px;top:903px;width:3.5px;height:1.8px;background:#9c9c9c"></div>
<div style="left:573px;top:775px;width:3.5px;height:1.8px;background:#9c9c9c"></div>
<div style="left:583.5px;top:775px;width:3.5px;height:1.8px;background:#9c9c9c"></div>
<div style="left:573px;top:866px;width:3.5px;height:1.8px;background:#9c9c9c"></div>
<div style="left:583.5px;top:866px;width:3.5px;height:1.8px;background:#9c9c9c"></div>
<div style="left:573px;top:912px;width:3.5px;height:1.8px;background:#9c9c9c"></div>
<div style="left:583.5px;top:912px;width:3.5px;height:1.8px;background:#9c9c9c"></div>
<div style="left:573px;top:830px;width:3.5px;height:1.8px;background:#9c9c9c"></div>
<div style="left:583.5px;top:830px;width:3.5px;height:1.8px;background:#9c9c9c"></div>
<div style="left:573px;top:875px;width:3.5px;height:1.8px;background:#9c9c9c"></div>
<div style="left:583.5px;top:875px;width:3.5px;height:1.8px;background:#9c9c9c"></div>
<div style="left:573px;top:921px;width:3.5px;height:1.8px;background:#9c9c9c"></div>
<div style="left:583.5px;top:921px;width:3.5px;height:1.8px;background:#9c9c9c"></div>
<div style="left:573px;top:839px;width:3.5px;height:1.8px;background:#9c9c9c"></div>
<div style="left:583.5px;top:839px;width:3.5px;height:1.8px;background:#9c9c9c"></div>
<div style="left:573px;top:885px;width:3.5px;height:1.8px;background:#9c9c9c"></div>
<div style="left:583.5px;top:885px;width:3.5px;height:1.8px;background:#9c9c9c"></div>
<div style="left:573px;top:930px;width:3.5px;height:1.8px;background:#9c9c9c"></div>
<div style="left:583.5px;top:930px;width:3.5px;height:1.8px;background:#9c9c9c"></div>
<div style="left:573px;top:951px;width:3.5px;height:1.8px;background:#9c9c9c"></div>
<div style="left:583.5px;top:951px;width:3.5px;height:1.8px;background:#9c9c9c"></div>
<div style="left:573px;top:973px;width:3.5px;height:1.8px;background:#9c9c9c"></div>
<div style="left:583.5px;top:973px;width:3.5px;height:1.8px;background:#9c9c9c"></div>
<div style="left:577.3px;top:752px;width:5.4px;height:70px;background:#000"></div>
<div style="left:577.3px;top:822px;width:5.4px;height:173.5px;background:#00b4ee"></div>
<div style="left:568.7px;top:783.7px;width:22.3px;height:37.6px;background:#c4c4c4;border:1.5px solid #111;border-radius:4px"></div>
<div style="left:569.5px;top:801.5px;width:20.7px;height:2.3px;background:#1a1a1a"></div>
<div style="left:548.8px;top:1004.3px;width:56px;height:25.3px;background:#000"></div>
<div class="t" style="left:548.80px;top:1005.75px;width:56px;text-align:center;font-size:18px;line-height:22.5px;color:#1684c6;">0.0</div>
<div class="t" style="left:566.50px;top:1033.25px;width:40px;text-align:right;font-size:14px;line-height:17.5px;color:#ddd;">dB</div>
<div class="t" style="left:498.80px;top:1049.44px;width:110px;text-align:center;font-size:14.5px;line-height:18.12px;color:#dcdcdc;">Dante Out1</div>
<div style="left:616.3px;top:420px;width:121.7px;height:648.5px;background:#1e1e20;border-radius:4px 4px 0 0"></div>
<div style="left:644.3px;top:427px;width:4px;height:14px;background:#0a78f0"></div>
<div class="t" style="left:653.0999999999999px;top:424.94px;font-size:14.5px;line-height:18.12px;color:#dcdcdc;">Dynamic</div>
<div style="left:631.3px;top:448px;width:92px;height:92px;background:#cce4fa"></div>
<div style="left:631.8px;top:547.7px;width:90.5px;height:27.1px;background:#434343;border:1.3px solid #141414;border-radius:6px"></div>
<div class="t" style="left:637.10px;top:550.88px;width:80px;text-align:center;font-size:17px;line-height:21.25px;color:#eee;">EQ</div>
<div style="left:616.3px;top:579px;width:121.7px;height:59px;background:#000"></div>
<svg width="2400" height="1200" viewBox="0 0 2400 1200"><g stroke="#555" stroke-width="1.6"><path d="M649.3 589 V630 M683.9 589 V630 M717.3 589 V630 M626.3 609 H727.3"/></g><path d="M650.3 630 C660.3 618 664.3 609 678.3 609 H728.3" fill="none" stroke="#ffee00" stroke-width="2"/></svg>
<div style="left:634.3px;top:646px;width:86.5px;height:42.75px;background:#363638;border-radius:22px"></div>
<svg width="2400" height="1200" viewBox="0 0 2400 1200"><rect x="651.5999999999999" y="656.9" width="7" height="14.5" rx="3.5" fill="#d6d6d6"/><path d="M647.8 666.5 A7.4 8.2 0 0 0 662.5999999999999 666.5" fill="none" stroke="#d6d6d6" stroke-width="1.8"/><path d="M655.0999999999999 674.3 V678.5" stroke="#d6d6d6" stroke-width="2.2"/></svg>
<svg width="2400" height="1200" viewBox="0 0 2400 1200"><g fill="none" stroke="#d0d0d0" stroke-width="2.2"><path d="M695.5 665.7 V662 A5.9 5.9 0 0 1 707.1999999999999 662 V665.7"/><path d="M695.5 668 V672.4 A5.9 5.9 0 0 0 707.1999999999999 672.4 V668"/><path d="M701.0 662.5 V672.5"/><path d="M693.3 657.6 L709.5999999999999 673"/></g></svg>
<div style="left:621.3px;top:697.7px;width:111.6px;height:21.3px;background:#000"></div>
<div class="t" style="left:621.60px;top:700.59px;width:111px;text-align:center;font-size:12.5px;line-height:15.62px;color:#d8d8d8;">CM-CH2</div>
<div style="left:638.0999999999999px;top:728px;width:77.7px;height:8.7px;background:#0050d0"></div>
<div style="left:658.0px;top:767.3px;width:7px;height:213.3px;background:#000;border-radius:2px"></div>
<div class="t" style="left:612.50px;top:766.14px;width:40px;text-align:right;font-size:10.5px;line-height:13.12px;color:#a8a8a8;">PK</div>
<div style="left:654.0px;top:772.5px;width:2.5px;height:1.3px;background:#a8a8a8"></div>
<div class="t" style="left:612.50px;top:784.44px;width:40px;text-align:right;font-size:10.5px;line-height:13.12px;color:#a8a8a8;">12</div>
<div style="left:654.0px;top:790.5px;width:2.5px;height:1.3px;background:#a8a8a8"></div>
<div class="t" style="left:612.50px;top:802.94px;width:40px;text-align:right;font-size:10.5px;line-height:13.12px;color:#a8a8a8;">6</div>
<div style="left:654.0px;top:809.5px;width:2.5px;height:1.3px;background:#a8a8a8"></div>
<div class="t" style="left:612.50px;top:820.94px;width:40px;text-align:right;font-size:10.5px;line-height:13.12px;color:#c8c8c8;font-weight:bold">0</div>
<div style="left:654.0px;top:827.5px;width:2.5px;height:1.3px;background:#a8a8a8"></div>
<div class="t" style="left:612.50px;top:839.44px;width:40px;text-align:right;font-size:10.5px;line-height:13.12px;color:#a8a8a8;">-6</div>
<div style="left:654.0px;top:845.5px;width:2.5px;height:1.3px;background:#a8a8a8"></div>
<div class="t" style="left:612.50px;top:857.44px;width:40px;text-align:right;font-size:10.5px;line-height:13.12px;color:#a8a8a8;">-12</div>
<div style="left:654.0px;top:863.5px;width:2.5px;height:1.3px;background:#a8a8a8"></div>
<div class="t" style="left:612.50px;top:894.44px;width:40px;text-align:right;font-size:10.5px;line-height:13.12px;color:#a8a8a8;">-24</div>
<div style="left:654.0px;top:900.5px;width:2.5px;height:1.3px;background:#a8a8a8"></div>
<div class="t" style="left:612.50px;top:930.84px;width:40px;text-align:right;font-size:10.5px;line-height:13.12px;color:#a8a8a8;">-36</div>
<div style="left:654.0px;top:936.5px;width:2.5px;height:1.3px;background:#a8a8a8"></div>
<div class="t" style="left:612.50px;top:967.94px;width:40px;text-align:right;font-size:10.5px;line-height:13.12px;color:#a8a8a8;">-48</div>
<div style="left:654.0px;top:973.5px;width:2.5px;height:1.3px;background:#a8a8a8"></div>
<div style="left:691.3px;top:756px;width:8.5px;height:1.8px;background:#9c9c9c"></div>
<div style="left:706.8px;top:756px;width:8.5px;height:1.8px;background:#9c9c9c"></div>
<div class="t" style="left:659.30px;top:750.74px;width:30px;text-align:right;font-size:10.5px;line-height:13.12px;color:#bbb;">10</div>
<div class="t" style="left:659.30px;top:796.44px;width:30px;text-align:right;font-size:10.5px;line-height:13.12px;color:#bbb;">0</div>
<div style="left:691.3px;top:848px;width:8.5px;height:1.8px;background:#9c9c9c"></div>
<div style="left:706.8px;top:848px;width:8.5px;height:1.8px;background:#9c9c9c"></div>
<div class="t" style="left:659.30px;top:842.44px;width:30px;text-align:right;font-size:10.5px;line-height:13.12px;color:#bbb;">10</div>
<div style="left:691.3px;top:894px;width:8.5px;height:1.8px;background:#9c9c9c"></div>
<div style="left:706.8px;top:894px;width:8.5px;height:1.8px;background:#9c9c9c"></div>
<div class="t" style="left:659.30px;top:888.14px;width:30px;text-align:right;font-size:10.5px;line-height:13.12px;color:#bbb;">20</div>
<div style="left:691.3px;top:939px;width:8.5px;height:1.8px;background:#9c9c9c"></div>
<div style="left:706.8px;top:939px;width:8.5px;height:1.8px;background:#9c9c9c"></div>
<div class="t" style="left:659.30px;top:933.84px;width:30px;text-align:right;font-size:10.5px;line-height:13.12px;color:#bbb;">30</div>
<div style="left:691.3px;top:962px;width:8.5px;height:1.8px;background:#9c9c9c"></div>
<div style="left:706.8px;top:962px;width:8.5px;height:1.8px;background:#9c9c9c"></div>
<div class="t" style="left:659.30px;top:956.24px;width:30px;text-align:right;font-size:10.5px;line-height:13.12px;color:#bbb;">40</div>
<div style="left:691.3px;top:983px;width:8.5px;height:1.8px;background:#9c9c9c"></div>
<div style="left:706.8px;top:983px;width:8.5px;height:1.8px;background:#9c9c9c"></div>
<div class="t" style="left:659.30px;top:976.80px;width:30px;text-align:right;font-size:12px;line-height:15.0px;color:#bbb;">&#8734;</div>
<div style="left:696.3px;top:765px;width:3.5px;height:1.8px;background:#9c9c9c"></div>
<div style="left:706.8px;top:765px;width:3.5px;height:1.8px;background:#9c9c9c"></div>
<div style="left:696.3px;top:857px;width:3.5px;height:1.8px;background:#9c9c9c"></div>
<div style="left:706.8px;top:857px;width:3.5px;height:1.8px;background:#9c9c9c"></div>
<div style="left:696.3px;top:903px;width:3.5px;height:1.8px;background:#9c9c9c"></div>
<div style="left:706.8px;top:903px;width:3.5px;height:1.8px;background:#9c9c9c"></div>
<div style="left:696.3px;top:775px;width:3.5px;height:1.8px;background:#9c9c9c"></div>
<div style="left:706.8px;top:775px;width:3.5px;height:1.8px;background:#9c9c9c"></div>
<div style="left:696.3px;top:866px;width:3.5px;height:1.8px;background:#9c9c9c"></div>
<div style="left:706.8px;top:866px;width:3.5px;height:1.8px;background:#9c9c9c"></div>
<div style="left:696.3px;top:912px;width:3.5px;height:1.8px;background:#9c9c9c"></div>
<div style="left:706.8px;top:912px;width:3.5px;height:1.8px;background:#9c9c9c"></div>
<div style="left:696.3px;top:830px;width:3.5px;height:1.8px;background:#9c9c9c"></div>
<div style="left:706.8px;top:830px;width:3.5px;height:1.8px;background:#9c9c9c"></div>
<div style="left:696.3px;top:875px;width:3.5px;height:1.8px;background:#9c9c9c"></div>
<div style="left:706.8px;top:875px;width:3.5px;height:1.8px;background:#9c9c9c"></div>
<div style="left:696.3px;top:921px;width:3.5px;height:1.8px;background:#9c9c9c"></div>
<div style="left:706.8px;top:921px;width:3.5px;height:1.8px;background:#9c9c9c"></div>
<div style="left:696.3px;top:839px;width:3.5px;height:1.8px;background:#9c9c9c"></div>
<div style="left:706.8px;top:839px;width:3.5px;height:1.8px;background:#9c9c9c"></div>
<div style="left:696.3px;top:885px;width:3.5px;height:1.8px;background:#9c9c9c"></div>
<div style="left:706.8px;top:885px;width:3.5px;height:1.8px;background:#9c9c9c"></div>
<div style="left:696.3px;top:930px;width:3.5px;height:1.8px;background:#9c9c9c"></div>
<div style="left:706.8px;top:930px;width:3.5px;height:1.8px;background:#9c9c9c"></div>
<div style="left:696.3px;top:951px;width:3.5px;height:1.8px;background:#9c9c9c"></div>
<div style="left:706.8px;top:951px;width:3.5px;height:1.8px;background:#9c9c9c"></div>
<div style="left:696.3px;top:973px;width:3.5px;height:1.8px;background:#9c9c9c"></div>
<div style="left:706.8px;top:973px;width:3.5px;height:1.8px;background:#9c9c9c"></div>
<div style="left:700.5999999999999px;top:752px;width:5.4px;height:70px;background:#000"></div>
<div style="left:700.5999999999999px;top:822px;width:5.4px;height:173.5px;background:#00b4ee"></div>
<div style="left:692.0px;top:783.7px;width:22.3px;height:37.6px;background:#c4c4c4;border:1.5px solid #111;border-radius:4px"></div>
<div style="left:692.8px;top:801.5px;width:20.7px;height:2.3px;background:#1a1a1a"></div>
<div style="left:672.0999999999999px;top:1004.3px;width:56px;height:25.3px;background:#000"></div>
<div class="t" style="left:672.10px;top:1005.75px;width:56px;text-align:center;font-size:18px;line-height:22.5px;color:#1684c6;">0.0</div>
<div class="t" style="left:689.80px;top:1033.25px;width:40px;text-align:right;font-size:14px;line-height:17.5px;color:#ddd;">dB</div>
<div class="t" style="left:622.10px;top:1049.44px;width:110px;text-align:center;font-size:14.5px;line-height:18.12px;color:#dcdcdc;">Dante Out2</div>
<div style="left:739.6px;top:420px;width:121.7px;height:648.5px;background:#1e1e20;border-radius:4px 4px 0 0"></div>
<div style="left:767.6px;top:427px;width:4px;height:14px;background:#0a78f0"></div>
<div class="t" style="left:776.4px;top:424.94px;font-size:14.5px;line-height:18.12px;color:#dcdcdc;">Dynamic</div>
<div style="left:754.6px;top:448px;width:92px;height:92px;background:#cce4fa"></div>
<div style="left:755.1px;top:547.7px;width:90.5px;height:27.1px;background:#434343;border:1.3px solid #141414;border-radius:6px"></div>
<div class="t" style="left:760.40px;top:550.88px;width:80px;text-align:center;font-size:17px;line-height:21.25px;color:#eee;">EQ</div>
<div style="left:739.6px;top:579px;width:121.7px;height:59px;background:#000"></div>
<svg width="2400" height="1200" viewBox="0 0 2400 1200"><g stroke="#555" stroke-width="1.6"><path d="M772.6 589 V630 M807.2 589 V630 M840.6 589 V630 M749.6 609 H850.6"/></g><path d="M773.6 630 C783.6 618 787.6 609 801.6 609 H851.6" fill="none" stroke="#ffee00" stroke-width="2"/></svg>
<div style="left:757.6px;top:646px;width:86.5px;height:42.75px;background:#363638;border-radius:22px"></div>
<svg width="2400" height="1200" viewBox="0 0 2400 1200"><rect x="774.9" y="656.9" width="7" height="14.5" rx="3.5" fill="#d6d6d6"/><path d="M771.1 666.5 A7.4 8.2 0 0 0 785.9 666.5" fill="none" stroke="#d6d6d6" stroke-width="1.8"/><path d="M778.4 674.3 V678.5" stroke="#d6d6d6" stroke-width="2.2"/></svg>
<svg width="2400" height="1200" viewBox="0 0 2400 1200"><g fill="none" stroke="#d0d0d0" stroke-width="2.2"><path d="M818.8000000000001 665.7 V662 A5.9 5.9 0 0 1 830.5 662 V665.7"/><path d="M818.8000000000001 668 V672.4 A5.9 5.9 0 0 0 830.5 672.4 V668"/><path d="M824.3000000000001 662.5 V672.5"/><path d="M816.6 657.6 L832.9 673"/></g></svg>
<div style="left:744.6px;top:697.7px;width:111.6px;height:21.3px;background:#000"></div>
<div class="t" style="left:744.90px;top:700.59px;width:111px;text-align:center;font-size:12.5px;line-height:15.62px;color:#d8d8d8;">CM-CH3</div>
<div style="left:761.4px;top:728px;width:77.7px;height:8.7px;background:#0050d0"></div>
<div style="left:781.3000000000001px;top:767.3px;width:7px;height:213.3px;background:#000;border-radius:2px"></div>
<div class="t" style="left:735.80px;top:766.14px;width:40px;text-align:right;font-size:10.5px;line-height:13.12px;color:#a8a8a8;">PK</div>
<div style="left:777.3000000000001px;top:772.5px;width:2.5px;height:1.3px;background:#a8a8a8"></div>
<div class="t" style="left:735.80px;top:784.44px;width:40px;text-align:right;font-size:10.5px;line-height:13.12px;color:#a8a8a8;">12</div>
<div style="left:777.3000000000001px;top:790.5px;width:2.5px;height:1.3px;background:#a8a8a8"></div>
<div class="t" style="left:735.80px;top:802.94px;width:40px;text-align:right;font-size:10.5px;line-height:13.12px;color:#a8a8a8;">6</div>
<div style="left:777.3000000000001px;top:809.5px;width:2.5px;height:1.3px;background:#a8a8a8"></div>
<div class="t" style="left:735.80px;top:820.94px;width:40px;text-align:right;font-size:10.5px;line-height:13.12px;color:#c8c8c8;font-weight:bold">0</div>
<div style="left:777.3000000000001px;top:827.5px;width:2.5px;height:1.3px;background:#a8a8a8"></div>
<div class="t" style="left:735.80px;top:839.44px;width:40px;text-align:right;font-size:10.5px;line-height:13.12px;color:#a8a8a8;">-6</div>
<div style="left:777.3000000000001px;top:845.5px;width:2.5px;height:1.3px;background:#a8a8a8"></div>
<div class="t" style="left:735.80px;top:857.44px;width:40px;text-align:right;font-size:10.5px;line-height:13.12px;color:#a8a8a8;">-12</div>
<div style="left:777.3000000000001px;top:863.5px;width:2.5px;height:1.3px;background:#a8a8a8"></div>
<div class="t" style="left:735.80px;top:894.44px;width:40px;text-align:right;font-size:10.5px;line-height:13.12px;color:#a8a8a8;">-24</div>
<div style="left:777.3000000000001px;top:900.5px;width:2.5px;height:1.3px;background:#a8a8a8"></div>
<div class="t" style="left:735.80px;top:930.84px;width:40px;text-align:right;font-size:10.5px;line-height:13.12px;color:#a8a8a8;">-36</div>
<div style="left:777.3000000000001px;top:936.5px;width:2.5px;height:1.3px;background:#a8a8a8"></div>
<div class="t" style="left:735.80px;top:967.94px;width:40px;text-align:right;font-size:10.5px;line-height:13.12px;color:#a8a8a8;">-48</div>
<div style="left:777.3000000000001px;top:973.5px;width:2.5px;height:1.3px;background:#a8a8a8"></div>
<div style="left:814.6px;top:756px;width:8.5px;height:1.8px;background:#9c9c9c"></div>
<div style="left:830.1px;top:756px;width:8.5px;height:1.8px;background:#9c9c9c"></div>
<div class="t" style="left:782.60px;top:750.74px;width:30px;text-align:right;font-size:10.5px;line-height:13.12px;color:#bbb;">10</div>
<div class="t" style="left:782.60px;top:796.44px;width:30px;text-align:right;font-size:10.5px;line-height:13.12px;color:#bbb;">0</div>
<div style="left:814.6px;top:848px;width:8.5px;height:1.8px;background:#9c9c9c"></div>
<div style="left:830.1px;top:848px;width:8.5px;height:1.8px;background:#9c9c9c"></div>
<div class="t" style="left:782.60px;top:842.44px;width:30px;text-align:right;font-size:10.5px;line-height:13.12px;color:#bbb;">10</div>
<div style="left:814.6px;top:894px;width:8.5px;height:1.8px;background:#9c9c9c"></div>
<div style="left:830.1px;top:894px;width:8.5px;height:1.8px;background:#9c9c9c"></div>
<div class="t" style="left:782.60px;top:888.14px;width:30px;text-align:right;font-size:10.5px;line-height:13.12px;color:#bbb;">20</div>
<div style="left:814.6px;top:939px;width:8.5px;height:1.8px;background:#9c9c9c"></div>
<div style="left:830.1px;top:939px;width:8.5px;height:1.8px;background:#9c9c9c"></div>
<div class="t" style="left:782.60px;top:933.84px;width:30px;text-align:right;font-size:10.5px;line-height:13.12px;color:#bbb;">30</div>
<div style="left:814.6px;top:962px;width:8.5px;height:1.8px;background:#9c9c9c"></div>
<div style="left:830.1px;top:962px;width:8.5px;height:1.8px;background:#9c9c9c"></div>
<div class="t" style="left:782.60px;top:956.24px;width:30px;text-align:right;font-size:10.5px;line-height:13.12px;color:#bbb;">40</div>
<div style="left:814.6px;top:983px;width:8.5px;height:1.8px;background:#9c9c9c"></div>
<div style="left:830.1px;top:983px;width:8.5px;height:1.8px;background:#9c9c9c"></div>
<div class="t" style="left:782.60px;top:976.80px;width:30px;text-align:right;font-size:12px;line-height:15.0px;color:#bbb;">&#8734;</div>
<div style="left:819.6px;top:765px;width:3.5px;height:1.8px;background:#9c9c9c"></div>
<div style="left:830.1px;top:765px;width:3.5px;height:1.8px;background:#9c9c9c"></div>
<div style="left:819.6px;top:857px;width:3.5px;height:1.8px;background:#9c9c9c"></div>
<div style="left:830.1px;top:857px;width:3.5px;height:1.8px;background:#9c9c9c"></div>
<div style="left:819.6px;top:903px;width:3.5px;height:1.8px;background:#9c9c9c"></div>
<div style="left:830.1px;top:903px;width:3.5px;height:1.8px;background:#9c9c9c"></div>
<div style="left:819.6px;top:775px;width:3.5px;height:1.8px;background:#9c9c9c"></div>
<div style="left:830.1px;top:775px;width:3.5px;height:1.8px;background:#9c9c9c"></div>
<div style="left:819.6px;top:866px;width:3.5px;height:1.8px;background:#9c9c9c"></div>
<div style="left:830.1px;top:866px;width:3.5px;height:1.8px;background:#9c9c9c"></div>
<div style="left:819.6px;top:912px;width:3.5px;height:1.8px;background:#9c9c9c"></div>
<div style="left:830.1px;top:912px;width:3.5px;height:1.8px;background:#9c9c9c"></div>
<div style="left:819.6px;top:830px;width:3.5px;height:1.8px;background:#9c9c9c"></div>
<div style="left:830.1px;top:830px;width:3.5px;height:1.8px;background:#9c9c9c"></div>
<div style="left:819.6px;top:875px;width:3.5px;height:1.8px;background:#9c9c9c"></div>
<div style="left:830.1px;top:875px;width:3.5px;height:1.8px;background:#9c9c9c"></div>
<div style="left:819.6px;top:921px;width:3.5px;height:1.8px;background:#9c9c9c"></div>
<div style="left:830.1px;top:921px;width:3.5px;height:1.8px;background:#9c9c9c"></div>
<div style="left:819.6px;top:839px;width:3.5px;height:1.8px;background:#9c9c9c"></div>
<div style="left:830.1px;top:839px;width:3.5px;height:1.8px;background:#9c9c9c"></div>
<div style="left:819.6px;top:885px;width:3.5px;height:1.8px;background:#9c9c9c"></div>
<div style="left:830.1px;top:885px;width:3.5px;height:1.8px;background:#9c9c9c"></div>
<div style="left:819.6px;top:930px;width:3.5px;height:1.8px;background:#9c9c9c"></div>
<div style="left:830.1px;top:930px;width:3.5px;height:1.8px;background:#9c9c9c"></div>
<div style="left:819.6px;top:951px;width:3.5px;height:1.8px;background:#9c9c9c"></div>
<div style="left:830.1px;top:951px;width:3.5px;height:1.8px;background:#9c9c9c"></div>
<div style="left:819.6px;top:973px;width:3.5px;height:1.8px;background:#9c9c9c"></div>
<div style="left:830.1px;top:973px;width:3.5px;height:1.8px;background:#9c9c9c"></div>
<div style="left:823.9px;top:752px;width:5.4px;height:70px;background:#000"></div>
<div style="left:823.9px;top:822px;width:5.4px;height:173.5px;background:#00b4ee"></div>
<div style="left:815.3000000000001px;top:783.7px;width:22.3px;height:37.6px;background:#c4c4c4;border:1.5px solid #111;border-radius:4px"></div>
<div style="left:816.1px;top:801.5px;width:20.7px;height:2.3px;background:#1a1a1a"></div>
<div style="left:795.4px;top:1004.3px;width:56px;height:25.3px;background:#000"></div>
<div class="t" style="left:795.40px;top:1005.75px;width:56px;text-align:center;font-size:18px;line-height:22.5px;color:#1684c6;">0.0</div>
<div class="t" style="left:813.10px;top:1033.25px;width:40px;text-align:right;font-size:14px;line-height:17.5px;color:#ddd;">dB</div>
<div class="t" style="left:745.40px;top:1049.44px;width:110px;text-align:center;font-size:14.5px;line-height:18.12px;color:#dcdcdc;">Dante Out3</div>
<div style="left:862.9px;top:420px;width:121.7px;height:648.5px;background:#1e1e20;border-radius:4px 4px 0 0"></div>
<div style="left:890.9px;top:427px;width:4px;height:14px;background:#0a78f0"></div>
<div class="t" style="left:899.6999999999999px;top:424.94px;font-size:14.5px;line-height:18.12px;color:#dcdcdc;">Dynamic</div>
<div style="left:877.9px;top:448px;width:92px;height:92px;background:#cce4fa"></div>
<div style="left:878.4px;top:547.7px;width:90.5px;height:27.1px;background:#434343;border:1.3px solid #141414;border-radius:6px"></div>
<div class="t" style="left:883.70px;top:550.88px;width:80px;text-align:center;font-size:17px;line-height:21.25px;color:#eee;">EQ</div>
<div style="left:862.9px;top:579px;width:121.7px;height:59px;background:#000"></div>
<svg width="2400" height="1200" viewBox="0 0 2400 1200"><g stroke="#555" stroke-width="1.6"><path d="M895.9 589 V630 M930.5 589 V630 M963.9 589 V630 M872.9 609 H973.9"/></g><path d="M896.9 630 C906.9 618 910.9 609 924.9 609 H974.9" fill="none" stroke="#ffee00" stroke-width="2"/></svg>
<div style="left:880.9px;top:646px;width:86.5px;height:42.75px;background:#363638;border-radius:22px"></div>
<svg width="2400" height="1200" viewBox="0 0 2400 1200"><rect x="898.1999999999999" y="656.9" width="7" height="14.5" rx="3.5" fill="#d6d6d6"/><path d="M894.4 666.5 A7.4 8.2 0 0 0 909.1999999999999 666.5" fill="none" stroke="#d6d6d6" stroke-width="1.8"/><path d="M901.6999999999999 674.3 V678.5" stroke="#d6d6d6" stroke-width="2.2"/></svg>
<svg width="2400" height="1200" viewBox="0 0 2400 1200"><g fill="none" stroke="#d0d0d0" stroke-width="2.2"><path d="M942.1 665.7 V662 A5.9 5.9 0 0 1 953.8 662 V665.7"/><path d="M942.1 668 V672.4 A5.9 5.9 0 0 0 953.8 672.4 V668"/><path d="M947.6 662.5 V672.5"/><path d="M939.9 657.6 L956.1999999999999 673"/></g></svg>
<div style="left:867.9px;top:697.7px;width:111.6px;height:21.3px;background:#000"></div>
<div class="t" style="left:868.20px;top:700.59px;width:111px;text-align:center;font-size:12.5px;line-height:15.62px;color:#d8d8d8;">CM-CH4</div>
<div style="left:884.6999999999999px;top:728px;width:77.7px;height:8.7px;background:#0050d0"></div>
<div style="left:904.6px;top:767.3px;width:7px;height:213.3px;background:#000;border-radius:2px"></div>
<div class="t" style="left:859.10px;top:766.14px;width:40px;text-align:right;font-size:10.5px;line-height:13.12px;color:#a8a8a8;">PK</div>
<div style="left:900.6px;top:772.5px;width:2.5px;height:1.3px;background:#a8a8a8"></div>
<div class="t" style="left:859.10px;top:784.44px;width:40px;text-align:right;font-size:10.5px;line-height:13.12px;color:#a8a8a8;">12</div>
<div style="left:900.6px;top:790.5px;width:2.5px;height:1.3px;background:#a8a8a8"></div>
<div class="t" style="left:859.10px;top:802.94px;width:40px;text-align:right;font-size:10.5px;line-height:13.12px;color:#a8a8a8;">6</div>
<div style="left:900.6px;top:809.5px;width:2.5px;height:1.3px;background:#a8a8a8"></div>
<div class="t" style="left:859.10px;top:820.94px;width:40px;text-align:right;font-size:10.5px;line-height:13.12px;color:#c8c8c8;font-weight:bold">0</div>
<div style="left:900.6px;top:827.5px;width:2.5px;height:1.3px;background:#a8a8a8"></div>
<div class="t" style="left:859.10px;top:839.44px;width:40px;text-align:right;font-size:10.5px;line-height:13.12px;color:#a8a8a8;">-6</div>
<div style="left:900.6px;top:845.5px;width:2.5px;height:1.3px;background:#a8a8a8"></div>
<div class="t" style="left:859.10px;top:857.44px;width:40px;text-align:right;font-size:10.5px;line-height:13.12px;color:#a8a8a8;">-12</div>
<div style="left:900.6px;top:863.5px;width:2.5px;height:1.3px;background:#a8a8a8"></div>
<div class="t" style="left:859.10px;top:894.44px;width:40px;text-align:right;font-size:10.5px;line-height:13.12px;color:#a8a8a8;">-24</div>
<div style="left:900.6px;top:900.5px;width:2.5px;height:1.3px;background:#a8a8a8"></div>
<div class="t" style="left:859.10px;top:930.84px;width:40px;text-align:right;font-size:10.5px;line-height:13.12px;color:#a8a8a8;">-36</div>
<div style="left:900.6px;top:936.5px;width:2.5px;height:1.3px;background:#a8a8a8"></div>
<div class="t" style="left:859.10px;top:967.94px;width:40px;text-align:right;font-size:10.5px;line-height:13.12px;color:#a8a8a8;">-48</div>
<div style="left:900.6px;top:973.5px;width:2.5px;height:1.3px;background:#a8a8a8"></div>
<div style="left:937.9px;top:756px;width:8.5px;height:1.8px;background:#9c9c9c"></div>
<div style="left:953.4px;top:756px;width:8.5px;height:1.8px;background:#9c9c9c"></div>
<div class="t" style="left:905.90px;top:750.74px;width:30px;text-align:right;font-size:10.5px;line-height:13.12px;color:#bbb;">10</div>
<div class="t" style="left:905.90px;top:796.44px;width:30px;text-align:right;font-size:10.5px;line-height:13.12px;color:#bbb;">0</div>
<div style="left:937.9px;top:848px;width:8.5px;height:1.8px;background:#9c9c9c"></div>
<div style="left:953.4px;top:848px;width:8.5px;height:1.8px;background:#9c9c9c"></div>
<div class="t" style="left:905.90px;top:842.44px;width:30px;text-align:right;font-size:10.5px;line-height:13.12px;color:#bbb;">10</div>
<div style="left:937.9px;top:894px;width:8.5px;height:1.8px;background:#9c9c9c"></div>
<div style="left:953.4px;top:894px;width:8.5px;height:1.8px;background:#9c9c9c"></div>
<div class="t" style="left:905.90px;top:888.14px;width:30px;text-align:right;font-size:10.5px;line-height:13.12px;color:#bbb;">20</div>
<div style="left:937.9px;top:939px;width:8.5px;height:1.8px;background:#9c9c9c"></div>
<div style="left:953.4px;top:939px;width:8.5px;height:1.8px;background:#9c9c9c"></div>
<div class="t" style="left:905.90px;top:933.84px;width:30px;text-align:right;font-size:10.5px;line-height:13.12px;color:#bbb;">30</div>
<div style="left:937.9px;top:962px;width:8.5px;height:1.8px;background:#9c9c9c"></div>
<div style="left:953.4px;top:962px;width:8.5px;height:1.8px;background:#9c9c9c"></div>
<div class="t" style="left:905.90px;top:956.24px;width:30px;text-align:right;font-size:10.5px;line-height:13.12px;color:#bbb;">40</div>
<div style="left:937.9px;top:983px;width:8.5px;height:1.8px;background:#9c9c9c"></div>
<div style="left:953.4px;top:983px;width:8.5px;height:1.8px;background:#9c9c9c"></div>
<div class="t" style="left:905.90px;top:976.80px;width:30px;text-align:right;font-size:12px;line-height:15.0px;color:#bbb;">&#8734;</div>
<div style="left:942.9px;top:765px;width:3.5px;height:1.8px;background:#9c9c9c"></div>
<div style="left:953.4px;top:765px;width:3.5px;height:1.8px;background:#9c9c9c"></div>
<div style="left:942.9px;top:857px;width:3.5px;height:1.8px;background:#9c9c9c"></div>
<div style="left:953.4px;top:857px;width:3.5px;height:1.8px;background:#9c9c9c"></div>
<div style="left:942.9px;top:903px;width:3.5px;height:1.8px;background:#9c9c9c"></div>
<div style="left:953.4px;top:903px;width:3.5px;height:1.8px;background:#9c9c9c"></div>
<div style="left:942.9px;top:775px;width:3.5px;height:1.8px;background:#9c9c9c"></div>
<div style="left:953.4px;top:775px;width:3.5px;height:1.8px;background:#9c9c9c"></div>
<div style="left:942.9px;top:866px;width:3.5px;height:1.8px;background:#9c9c9c"></div>
<div style="left:953.4px;top:866px;width:3.5px;height:1.8px;background:#9c9c9c"></div>
<div style="left:942.9px;top:912px;width:3.5px;height:1.8px;background:#9c9c9c"></div>
<div style="left:953.4px;top:912px;width:3.5px;height:1.8px;background:#9c9c9c"></div>
<div style="left:942.9px;top:830px;width:3.5px;height:1.8px;background:#9c9c9c"></div>
<div style="left:953.4px;top:830px;width:3.5px;height:1.8px;background:#9c9c9c"></div>
<div style="left:942.9px;top:875px;width:3.5px;height:1.8px;background:#9c9c9c"></div>
<div style="left:953.4px;top:875px;width:3.5px;height:1.8px;background:#9c9c9c"></div>
<div style="left:942.9px;top:921px;width:3.5px;height:1.8px;background:#9c9c9c"></div>
<div style="left:953.4px;top:921px;width:3.5px;height:1.8px;background:#9c9c9c"></div>
<div style="left:942.9px;top:839px;width:3.5px;height:1.8px;background:#9c9c9c"></div>
<div style="left:953.4px;top:839px;width:3.5px;height:1.8px;background:#9c9c9c"></div>
<div style="left:942.9px;top:885px;width:3.5px;height:1.8px;background:#9c9c9c"></div>
<div style="left:953.4px;top:885px;width:3.5px;height:1.8px;background:#9c9c9c"></div>
<div style="left:942.9px;top:930px;width:3.5px;height:1.8px;background:#9c9c9c"></div>
<div style="left:953.4px;top:930px;width:3.5px;height:1.8px;background:#9c9c9c"></div>
<div style="left:942.9px;top:951px;width:3.5px;height:1.8px;background:#9c9c9c"></div>
<div style="left:953.4px;top:951px;width:3.5px;height:1.8px;background:#9c9c9c"></div>
<div style="left:942.9px;top:973px;width:3.5px;height:1.8px;background:#9c9c9c"></div>
<div style="left:953.4px;top:973px;width:3.5px;height:1.8px;background:#9c9c9c"></div>
<div style="left:947.1999999999999px;top:752px;width:5.4px;height:70px;background:#000"></div>
<div style="left:947.1999999999999px;top:822px;width:5.4px;height:173.5px;background:#00b4ee"></div>
<div style="left:938.6px;top:783.7px;width:22.3px;height:37.6px;background:#c4c4c4;border:1.5px solid #111;border-radius:4px"></div>
<div style="left:939.4px;top:801.5px;width:20.7px;height:2.3px;background:#1a1a1a"></div>
<div style="left:918.6999999999999px;top:1004.3px;width:56px;height:25.3px;background:#000"></div>
<div class="t" style="left:918.70px;top:1005.75px;width:56px;text-align:center;font-size:18px;line-height:22.5px;color:#1684c6;">0.0</div>
<div class="t" style="left:936.40px;top:1033.25px;width:40px;text-align:right;font-size:14px;line-height:17.5px;color:#ddd;">dB</div>
<div class="t" style="left:868.70px;top:1049.44px;width:110px;text-align:center;font-size:14.5px;line-height:18.12px;color:#dcdcdc;">Dante Out4</div>
<div style="left:1004px;top:420px;width:121.7px;height:648.5px;background:#1e1e20;border-radius:4px 4px 0 0"></div>
<div style="left:1062px;top:443px;width:10px;height:4px;background:#555"></div>
<div class="ob" style="left:1026px;top:451px;width:78px;height:25.69999999999999px;"><div class="t" style="left:0px;top:1.54px;font-size:16.5px;line-height:20.62px;color:#fff;width:76px;text-align:center">DUCKER</div></div>
<div class="ob" style="left:1017px;top:482px;width:42.700000000000045px;height:25.5px;"><div class="t" style="left:0px;top:1.44px;font-size:16.5px;line-height:20.62px;color:#fff;width:40.700000000000045px;text-align:center">AEC</div></div>
<div class="ob" style="left:1068px;top:482px;width:44.799999999999955px;height:25.5px;"><div class="t" style="left:0px;top:1.44px;font-size:16.5px;line-height:20.62px;color:#fff;width:42.799999999999955px;text-align:center">AGC</div></div>
<div class="ob" style="left:1041px;top:511.7px;width:46px;height:26.30000000000001px;"><div class="t" style="left:0px;top:1.84px;font-size:16.5px;line-height:20.62px;color:#fff;width:44px;text-align:center">DNR</div></div>
<div style="left:1019.5px;top:547.7px;width:90.5px;height:27.1px;background:#434343;border:1.3px solid #141414;border-radius:6px"></div>
<div class="t" style="left:1024.80px;top:550.88px;width:80px;text-align:center;font-size:17px;line-height:21.25px;color:#eee;">EQ</div>
<div style="left:1004px;top:579px;width:121.7px;height:59px;background:#000"></div>
<svg width="2400" height="1200" viewBox="0 0 2400 1200"><g stroke="#555" stroke-width="1.6"><path d="M1037 589 V630 M1071.6 589 V630 M1105 589 V630 M1014 609 H1115"/></g><path d="M1038 630 C1048 618 1052 609 1066 609 H1116" fill="none" stroke="#ffee00" stroke-width="2"/></svg>
<div style="left:1022px;top:646px;width:86.5px;height:42.75px;background:#363638;border-radius:22px"></div>
<svg width="2400" height="1200" viewBox="0 0 2400 1200"><rect x="1039.3" y="656.9" width="7" height="14.5" rx="3.5" fill="#d6d6d6"/><path d="M1035.5 666.5 A7.4 8.2 0 0 0 1050.3 666.5" fill="none" stroke="#d6d6d6" stroke-width="1.8"/><path d="M1042.8 674.3 V678.5" stroke="#d6d6d6" stroke-width="2.2"/></svg>
<svg width="2400" height="1200" viewBox="0 0 2400 1200"><g fill="none" stroke="#d0d0d0" stroke-width="2.2"><path d="M1083.2 665.7 V662 A5.9 5.9 0 0 1 1094.9 662 V665.7"/><path d="M1083.2 668 V672.4 A5.9 5.9 0 0 0 1094.9 672.4 V668"/><path d="M1088.7 662.5 V672.5"/><path d="M1081 657.6 L1097.3 673"/></g></svg>
<div style="left:1009px;top:697.7px;width:111.6px;height:21.3px;background:#000"></div>
<div class="t" style="left:1009.30px;top:700.59px;width:111px;text-align:center;font-size:12.5px;line-height:15.62px;color:#d8d8d8;">CM-MIX</div>
<div style="left:1025.8px;top:728px;width:77.7px;height:8.7px;background:#4fc3f7"></div>
<div style="left:1045.7px;top:767.3px;width:7px;height:213.3px;background:#000;border-radius:2px"></div>
<div class="t" style="left:1000.20px;top:766.14px;width:40px;text-align:right;font-size:10.5px;line-height:13.12px;color:#a8a8a8;">PK</div>
<div style="left:1041.7px;top:772.5px;width:2.5px;height:1.3px;background:#a8a8a8"></div>
<div class="t" style="left:1000.20px;top:784.44px;width:40px;text-align:right;font-size:10.5px;line-height:13.12px;color:#a8a8a8;">12</div>
<div style="left:1041.7px;top:790.5px;width:2.5px;height:1.3px;background:#a8a8a8"></div>
<div class="t" style="left:1000.20px;top:802.94px;width:40px;text-align:right;font-size:10.5px;line-height:13.12px;color:#a8a8a8;">6</div>
<div style="left:1041.7px;top:809.5px;width:2.5px;height:1.3px;background:#a8a8a8"></div>
<div class="t" style="left:1000.20px;top:820.94px;width:40px;text-align:right;font-size:10.5px;line-height:13.12px;color:#c8c8c8;font-weight:bold">0</div>
<div style="left:1041.7px;top:827.5px;width:2.5px;height:1.3px;background:#a8a8a8"></div>
<div class="t" style="left:1000.20px;top:839.44px;width:40px;text-align:right;font-size:10.5px;line-height:13.12px;color:#a8a8a8;">-6</div>
<div style="left:1041.7px;top:845.5px;width:2.5px;height:1.3px;background:#a8a8a8"></div>
<div class="t" style="left:1000.20px;top:857.44px;width:40px;text-align:right;font-size:10.5px;line-height:13.12px;color:#a8a8a8;">-12</div>
<div style="left:1041.7px;top:863.5px;width:2.5px;height:1.3px;background:#a8a8a8"></div>
<div class="t" style="left:1000.20px;top:894.44px;width:40px;text-align:right;font-size:10.5px;line-height:13.12px;color:#a8a8a8;">-24</div>
<div style="left:1041.7px;top:900.5px;width:2.5px;height:1.3px;background:#a8a8a8"></div>
<div class="t" style="left:1000.20px;top:930.84px;width:40px;text-align:right;font-size:10.5px;line-height:13.12px;color:#a8a8a8;">-36</div>
<div style="left:1041.7px;top:936.5px;width:2.5px;height:1.3px;background:#a8a8a8"></div>
<div class="t" style="left:1000.20px;top:967.94px;width:40px;text-align:right;font-size:10.5px;line-height:13.12px;color:#a8a8a8;">-48</div>
<div style="left:1041.7px;top:973.5px;width:2.5px;height:1.3px;background:#a8a8a8"></div>
<div style="left:1079px;top:756px;width:8.5px;height:1.8px;background:#9c9c9c"></div>
<div style="left:1094.5px;top:756px;width:8.5px;height:1.8px;background:#9c9c9c"></div>
<div class="t" style="left:1047.00px;top:750.74px;width:30px;text-align:right;font-size:10.5px;line-height:13.12px;color:#bbb;">10</div>
<div class="t" style="left:1047.00px;top:796.44px;width:30px;text-align:right;font-size:10.5px;line-height:13.12px;color:#bbb;">0</div>
<div style="left:1079px;top:848px;width:8.5px;height:1.8px;background:#9c9c9c"></div>
<div style="left:1094.5px;top:848px;width:8.5px;height:1.8px;background:#9c9c9c"></div>
<div class="t" style="left:1047.00px;top:842.44px;width:30px;text-align:right;font-size:10.5px;line-height:13.12px;color:#bbb;">10</div>
<div style="left:1079px;top:894px;width:8.5px;height:1.8px;background:#9c9c9c"></div>
<div style="left:1094.5px;top:894px;width:8.5px;height:1.8px;background:#9c9c9c"></div>
<div class="t" style="left:1047.00px;top:888.14px;width:30px;text-align:right;font-size:10.5px;line-height:13.12px;color:#bbb;">20</div>
<div style="left:1079px;top:939px;width:8.5px;height:1.8px;background:#9c9c9c"></div>
<div style="left:1094.5px;top:939px;width:8.5px;height:1.8px;background:#9c9c9c"></div>
<div class="t" style="left:1047.00px;top:933.84px;width:30px;text-align:right;font-size:10.5px;line-height:13.12px;color:#bbb;">30</div>
<div style="left:1079px;top:962px;width:8.5px;height:1.8px;background:#9c9c9c"></div>
<div style="left:1094.5px;top:962px;width:8.5px;height:1.8px;background:#9c9c9c"></div>
<div class="t" style="left:1047.00px;top:956.24px;width:30px;text-align:right;font-size:10.5px;line-height:13.12px;color:#bbb;">40</div>
<div style="left:1079px;top:983px;width:8.5px;height:1.8px;background:#9c9c9c"></div>
<div style="left:1094.5px;top:983px;width:8.5px;height:1.8px;background:#9c9c9c"></div>
<div class="t" style="left:1047.00px;top:976.80px;width:30px;text-align:right;font-size:12px;line-height:15.0px;color:#bbb;">&#8734;</div>
<div style="left:1084px;top:765px;width:3.5px;height:1.8px;background:#9c9c9c"></div>
<div style="left:1094.5px;top:765px;width:3.5px;height:1.8px;background:#9c9c9c"></div>
<div style="left:1084px;top:857px;width:3.5px;height:1.8px;background:#9c9c9c"></div>
<div style="left:1094.5px;top:857px;width:3.5px;height:1.8px;background:#9c9c9c"></div>
<div style="left:1084px;top:903px;width:3.5px;height:1.8px;background:#9c9c9c"></div>
<div style="left:1094.5px;top:903px;width:3.5px;height:1.8px;background:#9c9c9c"></div>
<div style="left:1084px;top:775px;width:3.5px;height:1.8px;background:#9c9c9c"></div>
<div style="left:1094.5px;top:775px;width:3.5px;height:1.8px;background:#9c9c9c"></div>
<div style="left:1084px;top:866px;width:3.5px;height:1.8px;background:#9c9c9c"></div>
<div style="left:1094.5px;top:866px;width:3.5px;height:1.8px;background:#9c9c9c"></div>
<div style="left:1084px;top:912px;width:3.5px;height:1.8px;background:#9c9c9c"></div>
<div style="left:1094.5px;top:912px;width:3.5px;height:1.8px;background:#9c9c9c"></div>
<div style="left:1084px;top:830px;width:3.5px;height:1.8px;background:#9c9c9c"></div>
<div style="left:1094.5px;top:830px;width:3.5px;height:1.8px;background:#9c9c9c"></div>
<div style="left:1084px;top:875px;width:3.5px;height:1.8px;background:#9c9c9c"></div>
<div style="left:1094.5px;top:875px;width:3.5px;height:1.8px;background:#9c9c9c"></div>
<div style="left:1084px;top:921px;width:3.5px;height:1.8px;background:#9c9c9c"></div>
<div style="left:1094.5px;top:921px;width:3.5px;height:1.8px;background:#9c9c9c"></div>
<div style="left:1084px;top:839px;width:3.5px;height:1.8px;background:#9c9c9c"></div>
<div style="left:1094.5px;top:839px;width:3.5px;height:1.8px;background:#9c9c9c"></div>
<div style="left:1084px;top:885px;width:3.5px;height:1.8px;background:#9c9c9c"></div>
<div style="left:1094.5px;top:885px;width:3.5px;height:1.8px;background:#9c9c9c"></div>
<div style="left:1084px;top:930px;width:3.5px;height:1.8px;background:#9c9c9c"></div>
<div style="left:1094.5px;top:930px;width:3.5px;height:1.8px;background:#9c9c9c"></div>
<div style="left:1084px;top:951px;width:3.5px;height:1.8px;background:#9c9c9c"></div>
<div style="left:1094.5px;top:951px;width:3.5px;height:1.8px;background:#9c9c9c"></div>
<div style="left:1084px;top:973px;width:3.5px;height:1.8px;background:#9c9c9c"></div>
<div style="left:1094.5px;top:973px;width:3.5px;height:1.8px;background:#9c9c9c"></div>
<div style="left:1088.3px;top:752px;width:5.4px;height:70px;background:#000"></div>
<div style="left:1088.3px;top:822px;width:5.4px;height:173.5px;background:#00b4ee"></div>
<div style="left:1079.7px;top:783.7px;width:22.3px;height:37.6px;background:#c4c4c4;border:1.5px solid #111;border-radius:4px"></div>
<div style="left:1080.5px;top:801.5px;width:20.7px;height:2.3px;background:#1a1a1a"></div>
<div style="left:1059.8px;top:1004.3px;width:56px;height:25.3px;background:#000"></div>
<div class="t" style="left:1059.80px;top:1005.75px;width:56px;text-align:center;font-size:18px;line-height:22.5px;color:#1684c6;">0.0</div>
<div class="t" style="left:1077.50px;top:1033.25px;width:40px;text-align:right;font-size:14px;line-height:17.5px;color:#ddd;">dB</div>
<div class="t" style="left:1009.80px;top:1049.44px;width:110px;text-align:center;font-size:14.5px;line-height:18.12px;color:#dcdcdc;">Dante Out5</div>
<div style="left:1156px;top:420px;width:121.7px;height:648.5px;background:#1e1e20;border-radius:4px 4px 0 0"></div>
<div style="left:1161px;top:697.7px;width:111.6px;height:21.3px;background:#000"></div>
<div class="t" style="left:1161.30px;top:700.59px;width:111px;text-align:center;font-size:12.5px;line-height:15.62px;color:#d8d8d8;">ALL-MIX_WEB</div>
<div style="left:1177.8px;top:728px;width:77.7px;height:8.7px;background:#4fc3f7"></div>
<div style="left:1223.3px;top:767.3px;width:7px;height:213.3px;background:#000;border-radius:2px"></div>
<div class="t" style="left:1177.80px;top:766.14px;width:40px;text-align:right;font-size:10.5px;line-height:13.12px;color:#a8a8a8;">PK</div>
<div style="left:1219.3px;top:772.5px;width:2.5px;height:1.3px;background:#a8a8a8"></div>
<div class="t" style="left:1177.80px;top:784.44px;width:40px;text-align:right;font-size:10.5px;line-height:13.12px;color:#a8a8a8;">12</div>
<div style="left:1219.3px;top:790.5px;width:2.5px;height:1.3px;background:#a8a8a8"></div>
<div class="t" style="left:1177.80px;top:802.94px;width:40px;text-align:right;font-size:10.5px;line-height:13.12px;color:#a8a8a8;">6</div>
<div style="left:1219.3px;top:809.5px;width:2.5px;height:1.3px;background:#a8a8a8"></div>
<div class="t" style="left:1177.80px;top:820.94px;width:40px;text-align:right;font-size:10.5px;line-height:13.12px;color:#c8c8c8;font-weight:bold">0</div>
<div style="left:1219.3px;top:827.5px;width:2.5px;height:1.3px;background:#a8a8a8"></div>
<div class="t" style="left:1177.80px;top:839.44px;width:40px;text-align:right;font-size:10.5px;line-height:13.12px;color:#a8a8a8;">-6</div>
<div style="left:1219.3px;top:845.5px;width:2.5px;height:1.3px;background:#a8a8a8"></div>
<div class="t" style="left:1177.80px;top:857.44px;width:40px;text-align:right;font-size:10.5px;line-height:13.12px;color:#a8a8a8;">-12</div>
<div style="left:1219.3px;top:863.5px;width:2.5px;height:1.3px;background:#a8a8a8"></div>
<div class="t" style="left:1177.80px;top:894.44px;width:40px;text-align:right;font-size:10.5px;line-height:13.12px;color:#a8a8a8;">-24</div>
<div style="left:1219.3px;top:900.5px;width:2.5px;height:1.3px;background:#a8a8a8"></div>
<div class="t" style="left:1177.80px;top:930.84px;width:40px;text-align:right;font-size:10.5px;line-height:13.12px;color:#a8a8a8;">-36</div>
<div style="left:1219.3px;top:936.5px;width:2.5px;height:1.3px;background:#a8a8a8"></div>
<div class="t" style="left:1177.80px;top:967.94px;width:40px;text-align:right;font-size:10.5px;line-height:13.12px;color:#a8a8a8;">-48</div>
<div style="left:1219.3px;top:973.5px;width:2.5px;height:1.3px;background:#a8a8a8"></div>
<div class="t" style="left:1161.80px;top:1049.44px;width:110px;text-align:center;font-size:14.5px;line-height:18.12px;color:#dcdcdc;">Dante Out6</div>
<div style="left:1307px;top:420px;width:121.7px;height:648.5px;background:#1e1e20;border-radius:4px 4px 0 0"></div>
<div style="left:1312px;top:697.7px;width:111.6px;height:21.3px;background:#000"></div>
<div class="t" style="left:1312.30px;top:700.59px;width:111px;text-align:center;font-size:12.5px;line-height:15.62px;color:#d8d8d8;">WMIC1_WEB</div>
<div style="left:1328.8px;top:728px;width:77.7px;height:8.7px;background:#3c3c3e"></div>
<div class="ob" style="left:1320px;top:450.5px;width:43px;height:26.5px;"><div class="t" style="left:0px;top:1.94px;font-size:16.5px;line-height:20.62px;color:#fff;width:41px;text-align:center">AEC</div></div>
<div class="ob" style="left:1371px;top:450.5px;width:44px;height:26.5px;"><div class="t" style="left:0px;top:1.94px;font-size:16.5px;line-height:20.62px;color:#fff;width:42px;text-align:center">AGC</div></div>
<div style="left:1325px;top:646px;width:86.5px;height:42.75px;background:#363638;border-radius:22px"></div>
<svg width="2400" height="1200" viewBox="0 0 2400 1200"><rect x="1342.3" y="656.9" width="7" height="14.5" rx="3.5" fill="#d6d6d6"/><path d="M1338.5 666.5 A7.4 8.2 0 0 0 1353.3 666.5" fill="none" stroke="#d6d6d6" stroke-width="1.8"/><path d="M1345.8 674.3 V678.5" stroke="#d6d6d6" stroke-width="2.2"/></svg>
<svg width="2400" height="1200" viewBox="0 0 2400 1200"><g fill="none" stroke="#d0d0d0" stroke-width="2.2"><path d="M1386.2 665.7 V662 A5.9 5.9 0 0 1 1397.9 662 V665.7"/><path d="M1386.2 668 V672.4 A5.9 5.9 0 0 0 1397.9 672.4 V668"/><path d="M1391.7 662.5 V672.5"/><path d="M1384 657.6 L1400.3 673"/></g></svg>
<div style="left:1349px;top:767.3px;width:7px;height:213.3px;background:#000;border-radius:2px"></div>
<div class="t" style="left:1303.50px;top:766.14px;width:40px;text-align:right;font-size:10.5px;line-height:13.12px;color:#a8a8a8;">PK</div>
<div style="left:1345px;top:772.5px;width:2.5px;height:1.3px;background:#a8a8a8"></div>
<div class="t" style="left:1303.50px;top:784.44px;width:40px;text-align:right;font-size:10.5px;line-height:13.12px;color:#a8a8a8;">12</div>
<div style="left:1345px;top:790.5px;width:2.5px;height:1.3px;background:#a8a8a8"></div>
<div class="t" style="left:1303.50px;top:802.94px;width:40px;text-align:right;font-size:10.5px;line-height:13.12px;color:#a8a8a8;">6</div>
<div style="left:1345px;top:809.5px;width:2.5px;height:1.3px;background:#a8a8a8"></div>
<div class="t" style="left:1303.50px;top:820.94px;width:40px;text-align:right;font-size:10.5px;line-height:13.12px;color:#c8c8c8;font-weight:bold">0</div>
<div style="left:1345px;top:827.5px;width:2.5px;height:1.3px;background:#a8a8a8"></div>
<div class="t" style="left:1303.50px;top:839.44px;width:40px;text-align:right;font-size:10.5px;line-height:13.12px;color:#a8a8a8;">-6</div>
<div style="left:1345px;top:845.5px;width:2.5px;height:1.3px;background:#a8a8a8"></div>
<div class="t" style="left:1303.50px;top:857.44px;width:40px;text-align:right;font-size:10.5px;line-height:13.12px;color:#a8a8a8;">-12</div>
<div style="left:1345px;top:863.5px;width:2.5px;height:1.3px;background:#a8a8a8"></div>
<div class="t" style="left:1303.50px;top:894.44px;width:40px;text-align:right;font-size:10.5px;line-height:13.12px;color:#a8a8a8;">-24</div>
<div style="left:1345px;top:900.5px;width:2.5px;height:1.3px;background:#a8a8a8"></div>
<div class="t" style="left:1303.50px;top:930.84px;width:40px;text-align:right;font-size:10.5px;line-height:13.12px;color:#a8a8a8;">-36</div>
<div style="left:1345px;top:936.5px;width:2.5px;height:1.3px;background:#a8a8a8"></div>
<div class="t" style="left:1303.50px;top:967.94px;width:40px;text-align:right;font-size:10.5px;line-height:13.12px;color:#a8a8a8;">-48</div>
<div style="left:1345px;top:973.5px;width:2.5px;height:1.3px;background:#a8a8a8"></div>
<div style="left:1382px;top:756px;width:8.5px;height:1.8px;background:#9c9c9c"></div>
<div style="left:1397.5px;top:756px;width:8.5px;height:1.8px;background:#9c9c9c"></div>
<div class="t" style="left:1350.00px;top:750.74px;width:30px;text-align:right;font-size:10.5px;line-height:13.12px;color:#bbb;">10</div>
<div class="t" style="left:1350.00px;top:796.44px;width:30px;text-align:right;font-size:10.5px;line-height:13.12px;color:#bbb;">0</div>
<div style="left:1382px;top:848px;width:8.5px;height:1.8px;background:#9c9c9c"></div>
<div style="left:1397.5px;top:848px;width:8.5px;height:1.8px;background:#9c9c9c"></div>
<div class="t" style="left:1350.00px;top:842.44px;width:30px;text-align:right;font-size:10.5px;line-height:13.12px;color:#bbb;">10</div>
<div style="left:1382px;top:894px;width:8.5px;height:1.8px;background:#9c9c9c"></div>
<div style="left:1397.5px;top:894px;width:8.5px;height:1.8px;background:#9c9c9c"></div>
<div class="t" style="left:1350.00px;top:888.14px;width:30px;text-align:right;font-size:10.5px;line-height:13.12px;color:#bbb;">20</div>
<div style="left:1382px;top:939px;width:8.5px;height:1.8px;background:#9c9c9c"></div>
<div style="left:1397.5px;top:939px;width:8.5px;height:1.8px;background:#9c9c9c"></div>
<div class="t" style="left:1350.00px;top:933.84px;width:30px;text-align:right;font-size:10.5px;line-height:13.12px;color:#bbb;">30</div>
<div style="left:1382px;top:962px;width:8.5px;height:1.8px;background:#9c9c9c"></div>
<div style="left:1397.5px;top:962px;width:8.5px;height:1.8px;background:#9c9c9c"></div>
<div class="t" style="left:1350.00px;top:956.24px;width:30px;text-align:right;font-size:10.5px;line-height:13.12px;color:#bbb;">40</div>
<div style="left:1382px;top:983px;width:8.5px;height:1.8px;background:#9c9c9c"></div>
<div style="left:1397.5px;top:983px;width:8.5px;height:1.8px;background:#9c9c9c"></div>
<div class="t" style="left:1350.00px;top:976.80px;width:30px;text-align:right;font-size:12px;line-height:15.0px;color:#bbb;">&#8734;</div>
<div style="left:1387px;top:765px;width:3.5px;height:1.8px;background:#9c9c9c"></div>
<div style="left:1397.5px;top:765px;width:3.5px;height:1.8px;background:#9c9c9c"></div>
<div style="left:1387px;top:857px;width:3.5px;height:1.8px;background:#9c9c9c"></div>
<div style="left:1397.5px;top:857px;width:3.5px;height:1.8px;background:#9c9c9c"></div>
<div style="left:1387px;top:903px;width:3.5px;height:1.8px;background:#9c9c9c"></div>
<div style="left:1397.5px;top:903px;width:3.5px;height:1.8px;background:#9c9c9c"></div>
<div style="left:1387px;top:775px;width:3.5px;height:1.8px;background:#9c9c9c"></div>
<div style="left:1397.5px;top:775px;width:3.5px;height:1.8px;background:#9c9c9c"></div>
<div style="left:1387px;top:866px;width:3.5px;height:1.8px;background:#9c9c9c"></div>
<div style="left:1397.5px;top:866px;width:3.5px;height:1.8px;background:#9c9c9c"></div>
<div style="left:1387px;top:912px;width:3.5px;height:1.8px;background:#9c9c9c"></div>
<div style="left:1397.5px;top:912px;width:3.5px;height:1.8px;background:#9c9c9c"></div>
<div style="left:1387px;top:830px;width:3.5px;height:1.8px;background:#9c9c9c"></div>
<div style="left:1397.5px;top:830px;width:3.5px;height:1.8px;background:#9c9c9c"></div>
<div style="left:1387px;top:875px;width:3.5px;height:1.8px;background:#9c9c9c"></div>
<div style="left:1397.5px;top:875px;width:3.5px;height:1.8px;background:#9c9c9c"></div>
<div style="left:1387px;top:921px;width:3.5px;height:1.8px;background:#9c9c9c"></div>
<div style="left:1397.5px;top:921px;width:3.5px;height:1.8px;background:#9c9c9c"></div>
<div style="left:1387px;top:839px;width:3.5px;height:1.8px;background:#9c9c9c"></div>
<div style="left:1397.5px;top:839px;width:3.5px;height:1.8px;background:#9c9c9c"></div>
<div style="left:1387px;top:885px;width:3.5px;height:1.8px;background:#9c9c9c"></div>
<div style="left:1397.5px;top:885px;width:3.5px;height:1.8px;background:#9c9c9c"></div>
<div style="left:1387px;top:930px;width:3.5px;height:1.8px;background:#9c9c9c"></div>
<div style="left:1397.5px;top:930px;width:3.5px;height:1.8px;background:#9c9c9c"></div>
<div style="left:1387px;top:951px;width:3.5px;height:1.8px;background:#9c9c9c"></div>
<div style="left:1397.5px;top:951px;width:3.5px;height:1.8px;background:#9c9c9c"></div>
<div style="left:1387px;top:973px;width:3.5px;height:1.8px;background:#9c9c9c"></div>
<div style="left:1397.5px;top:973px;width:3.5px;height:1.8px;background:#9c9c9c"></div>
<div style="left:1391.3px;top:752px;width:5.4px;height:70px;background:#000"></div>
<div style="left:1391.3px;top:822px;width:5.4px;height:173.5px;background:#00b4ee"></div>
<div style="left:1382.7px;top:783.7px;width:22.3px;height:37.6px;background:#c4c4c4;border:1.5px solid #111;border-radius:4px"></div>
<div style="left:1383.5px;top:801.5px;width:20.7px;height:2.3px;background:#1a1a1a"></div>
<div style="left:1362.8px;top:1004.3px;width:56px;height:25.3px;background:#000"></div>
<div class="t" style="left:1362.80px;top:1005.75px;width:56px;text-align:center;font-size:18px;line-height:22.5px;color:#1684c6;">0.0</div>
<div class="t" style="left:1380.50px;top:1033.25px;width:40px;text-align:right;font-size:14px;line-height:17.5px;color:#ddd;">dB</div>
<div style="left:1430.3px;top:420px;width:121.7px;height:648.5px;background:#1e1e20;border-radius:4px 4px 0 0"></div>
<div style="left:1435.3px;top:697.7px;width:111.6px;height:21.3px;background:#000"></div>
<div class="t" style="left:1435.60px;top:700.59px;width:111px;text-align:center;font-size:12.5px;line-height:15.62px;color:#d8d8d8;">WMIC2_WEB</div>
<div style="left:1452.1px;top:728px;width:77.7px;height:8.7px;background:#3c3c3e"></div>
<div class="ob" style="left:1443.3px;top:450.5px;width:43.0px;height:26.5px;"><div class="t" style="left:0px;top:1.94px;font-size:16.5px;line-height:20.62px;color:#fff;width:41.0px;text-align:center">AEC</div></div>
<div class="ob" style="left:1494.3px;top:450.5px;width:44.0px;height:26.5px;"><div class="t" style="left:0px;top:1.94px;font-size:16.5px;line-height:20.62px;color:#fff;width:42.0px;text-align:center">AGC</div></div>
<div style="left:1448.3px;top:646px;width:86.5px;height:42.75px;background:#363638;border-radius:22px"></div>
<svg width="2400" height="1200" viewBox="0 0 2400 1200"><rect x="1465.6" y="656.9" width="7" height="14.5" rx="3.5" fill="#d6d6d6"/><path d="M1461.8 666.5 A7.4 8.2 0 0 0 1476.6 666.5" fill="none" stroke="#d6d6d6" stroke-width="1.8"/><path d="M1469.1 674.3 V678.5" stroke="#d6d6d6" stroke-width="2.2"/></svg>
<svg width="2400" height="1200" viewBox="0 0 2400 1200"><g fill="none" stroke="#d0d0d0" stroke-width="2.2"><path d="M1509.5 665.7 V662 A5.9 5.9 0 0 1 1521.2 662 V665.7"/><path d="M1509.5 668 V672.4 A5.9 5.9 0 0 0 1521.2 672.4 V668"/><path d="M1515.0 662.5 V672.5"/><path d="M1507.3 657.6 L1523.6 673"/></g></svg>
<div style="left:1472.3px;top:767.3px;width:7px;height:213.3px;background:#000;border-radius:2px"></div>
<div class="t" style="left:1426.80px;top:766.14px;width:40px;text-align:right;font-size:10.5px;line-height:13.12px;color:#a8a8a8;">PK</div>
<div style="left:1468.3px;top:772.5px;width:2.5px;height:1.3px;background:#a8a8a8"></div>
<div class="t" style="left:1426.80px;top:784.44px;width:40px;text-align:right;font-size:10.5px;line-height:13.12px;color:#a8a8a8;">12</div>
<div style="left:1468.3px;top:790.5px;width:2.5px;height:1.3px;background:#a8a8a8"></div>
<div class="t" style="left:1426.80px;top:802.94px;width:40px;text-align:right;font-size:10.5px;line-height:13.12px;color:#a8a8a8;">6</div>
<div style="left:1468.3px;top:809.5px;width:2.5px;height:1.3px;background:#a8a8a8"></div>
<div class="t" style="left:1426.80px;top:820.94px;width:40px;text-align:right;font-size:10.5px;line-height:13.12px;color:#c8c8c8;font-weight:bold">0</div>
<div style="left:1468.3px;top:827.5px;width:2.5px;height:1.3px;background:#a8a8a8"></div>
<div class="t" style="left:1426.80px;top:839.44px;width:40px;text-align:right;font-size:10.5px;line-height:13.12px;color:#a8a8a8;">-6</div>
<div style="left:1468.3px;top:845.5px;width:2.5px;height:1.3px;background:#a8a8a8"></div>
<div class="t" style="left:1426.80px;top:857.44px;width:40px;text-align:right;font-size:10.5px;line-height:13.12px;color:#a8a8a8;">-12</div>
<div style="left:1468.3px;top:863.5px;width:2.5px;height:1.3px;background:#a8a8a8"></div>
<div class="t" style="left:1426.80px;top:894.44px;width:40px;text-align:right;font-size:10.5px;line-height:13.12px;color:#a8a8a8;">-24</div>
<div style="left:1468.3px;top:900.5px;width:2.5px;height:1.3px;background:#a8a8a8"></div>
<div class="t" style="left:1426.80px;top:930.84px;width:40px;text-align:right;font-size:10.5px;line-height:13.12px;color:#a8a8a8;">-36</div>
<div style="left:1468.3px;top:936.5px;width:2.5px;height:1.3px;background:#a8a8a8"></div>
<div class="t" style="left:1426.80px;top:967.94px;width:40px;text-align:right;font-size:10.5px;line-height:13.12px;color:#a8a8a8;">-48</div>
<div style="left:1468.3px;top:973.5px;width:2.5px;height:1.3px;background:#a8a8a8"></div>
<div style="left:1505.3px;top:756px;width:8.5px;height:1.8px;background:#9c9c9c"></div>
<div style="left:1520.8px;top:756px;width:8.5px;height:1.8px;background:#9c9c9c"></div>
<div class="t" style="left:1473.30px;top:750.74px;width:30px;text-align:right;font-size:10.5px;line-height:13.12px;color:#bbb;">10</div>
<div class="t" style="left:1473.30px;top:796.44px;width:30px;text-align:right;font-size:10.5px;line-height:13.12px;color:#bbb;">0</div>
<div style="left:1505.3px;top:848px;width:8.5px;height:1.8px;background:#9c9c9c"></div>
<div style="left:1520.8px;top:848px;width:8.5px;height:1.8px;background:#9c9c9c"></div>
<div class="t" style="left:1473.30px;top:842.44px;width:30px;text-align:right;font-size:10.5px;line-height:13.12px;color:#bbb;">10</div>
<div style="left:1505.3px;top:894px;width:8.5px;height:1.8px;background:#9c9c9c"></div>
<div style="left:1520.8px;top:894px;width:8.5px;height:1.8px;background:#9c9c9c"></div>
<div class="t" style="left:1473.30px;top:888.14px;width:30px;text-align:right;font-size:10.5px;line-height:13.12px;color:#bbb;">20</div>
<div style="left:1505.3px;top:939px;width:8.5px;height:1.8px;background:#9c9c9c"></div>
<div style="left:1520.8px;top:939px;width:8.5px;height:1.8px;background:#9c9c9c"></div>
<div class="t" style="left:1473.30px;top:933.84px;width:30px;text-align:right;font-size:10.5px;line-height:13.12px;color:#bbb;">30</div>
<div style="left:1505.3px;top:962px;width:8.5px;height:1.8px;background:#9c9c9c"></div>
<div style="left:1520.8px;top:962px;width:8.5px;height:1.8px;background:#9c9c9c"></div>
<div class="t" style="left:1473.30px;top:956.24px;width:30px;text-align:right;font-size:10.5px;line-height:13.12px;color:#bbb;">40</div>
<div style="left:1505.3px;top:983px;width:8.5px;height:1.8px;background:#9c9c9c"></div>
<div style="left:1520.8px;top:983px;width:8.5px;height:1.8px;background:#9c9c9c"></div>
<div class="t" style="left:1473.30px;top:976.80px;width:30px;text-align:right;font-size:12px;line-height:15.0px;color:#bbb;">&#8734;</div>
<div style="left:1510.3px;top:765px;width:3.5px;height:1.8px;background:#9c9c9c"></div>
<div style="left:1520.8px;top:765px;width:3.5px;height:1.8px;background:#9c9c9c"></div>
<div style="left:1510.3px;top:857px;width:3.5px;height:1.8px;background:#9c9c9c"></div>
<div style="left:1520.8px;top:857px;width:3.5px;height:1.8px;background:#9c9c9c"></div>
<div style="left:1510.3px;top:903px;width:3.5px;height:1.8px;background:#9c9c9c"></div>
<div style="left:1520.8px;top:903px;width:3.5px;height:1.8px;background:#9c9c9c"></div>
<div style="left:1510.3px;top:775px;width:3.5px;height:1.8px;background:#9c9c9c"></div>
<div style="left:1520.8px;top:775px;width:3.5px;height:1.8px;background:#9c9c9c"></div>
<div style="left:1510.3px;top:866px;width:3.5px;height:1.8px;background:#9c9c9c"></div>
<div style="left:1520.8px;top:866px;width:3.5px;height:1.8px;background:#9c9c9c"></div>
<div style="left:1510.3px;top:912px;width:3.5px;height:1.8px;background:#9c9c9c"></div>
<div style="left:1520.8px;top:912px;width:3.5px;height:1.8px;background:#9c9c9c"></div>
<div style="left:1510.3px;top:830px;width:3.5px;height:1.8px;background:#9c9c9c"></div>
<div style="left:1520.8px;top:830px;width:3.5px;height:1.8px;background:#9c9c9c"></div>
<div style="left:1510.3px;top:875px;width:3.5px;height:1.8px;background:#9c9c9c"></div>
<div style="left:1520.8px;top:875px;width:3.5px;height:1.8px;background:#9c9c9c"></div>
<div style="left:1510.3px;top:921px;width:3.5px;height:1.8px;background:#9c9c9c"></div>
<div style="left:1520.8px;top:921px;width:3.5px;height:1.8px;background:#9c9c9c"></div>
<div style="left:1510.3px;top:839px;width:3.5px;height:1.8px;background:#9c9c9c"></div>
<div style="left:1520.8px;top:839px;width:3.5px;height:1.8px;background:#9c9c9c"></div>
<div style="left:1510.3px;top:885px;width:3.5px;height:1.8px;background:#9c9c9c"></div>
<div style="left:1520.8px;top:885px;width:3.5px;height:1.8px;background:#9c9c9c"></div>
<div style="left:1510.3px;top:930px;width:3.5px;height:1.8px;background:#9c9c9c"></div>
<div style="left:1520.8px;top:930px;width:3.5px;height:1.8px;background:#9c9c9c"></div>
<div style="left:1510.3px;top:951px;width:3.5px;height:1.8px;background:#9c9c9c"></div>
<div style="left:1520.8px;top:951px;width:3.5px;height:1.8px;background:#9c9c9c"></div>
<div style="left:1510.3px;top:973px;width:3.5px;height:1.8px;background:#9c9c9c"></div>
<div style="left:1520.8px;top:973px;width:3.5px;height:1.8px;background:#9c9c9c"></div>
<div style="left:1514.6px;top:752px;width:5.4px;height:70px;background:#000"></div>
<div style="left:1514.6px;top:822px;width:5.4px;height:173.5px;background:#00b4ee"></div>
<div style="left:1506.0px;top:783.7px;width:22.3px;height:37.6px;background:#c4c4c4;border:1.5px solid #111;border-radius:4px"></div>
<div style="left:1506.8px;top:801.5px;width:20.7px;height:2.3px;background:#1a1a1a"></div>
<div style="left:1486.1px;top:1004.3px;width:56px;height:25.3px;background:#000"></div>
<div class="t" style="left:1486.10px;top:1005.75px;width:56px;text-align:center;font-size:18px;line-height:22.5px;color:#1684c6;">0.0</div>
<div class="t" style="left:1503.80px;top:1033.25px;width:40px;text-align:right;font-size:14px;line-height:17.5px;color:#ddd;">dB</div>
<div style="left:1553.6px;top:420px;width:121.7px;height:648.5px;background:#1e1e20;border-radius:4px 4px 0 0"></div>
<div style="left:1558.6px;top:697.7px;width:111.6px;height:21.3px;background:#000"></div>
<div class="t" style="left:1558.90px;top:700.59px;width:111px;text-align:center;font-size:12.5px;line-height:15.62px;color:#d8d8d8;">WMIC-MIX_WEB</div>
<div style="left:1575.3999999999999px;top:728px;width:77.7px;height:8.7px;background:#3c3c3e"></div>
<div style="left:1620.8999999999999px;top:767.3px;width:7px;height:213.3px;background:#000;border-radius:2px"></div>
<div class="t" style="left:1575.40px;top:766.14px;width:40px;text-align:right;font-size:10.5px;line-height:13.12px;color:#a8a8a8;">PK</div>
<div style="left:1616.8999999999999px;top:772.5px;width:2.5px;height:1.3px;background:#a8a8a8"></div>
<div class="t" style="left:1575.40px;top:784.44px;width:40px;text-align:right;font-size:10.5px;line-height:13.12px;color:#a8a8a8;">12</div>
<div style="left:1616.8999999999999px;top:790.5px;width:2.5px;height:1.3px;background:#a8a8a8"></div>
<div class="t" style="left:1575.40px;top:802.94px;width:40px;text-align:right;font-size:10.5px;line-height:13.12px;color:#a8a8a8;">6</div>
<div style="left:1616.8999999999999px;top:809.5px;width:2.5px;height:1.3px;background:#a8a8a8"></div>
<div class="t" style="left:1575.40px;top:820.94px;width:40px;text-align:right;font-size:10.5px;line-height:13.12px;color:#c8c8c8;font-weight:bold">0</div>
<div style="left:1616.8999999999999px;top:827.5px;width:2.5px;height:1.3px;background:#a8a8a8"></div>
<div class="t" style="left:1575.40px;top:839.44px;width:40px;text-align:right;font-size:10.5px;line-height:13.12px;color:#a8a8a8;">-6</div>
<div style="left:1616.8999999999999px;top:845.5px;width:2.5px;height:1.3px;background:#a8a8a8"></div>
<div class="t" style="left:1575.40px;top:857.44px;width:40px;text-align:right;font-size:10.5px;line-height:13.12px;color:#a8a8a8;">-12</div>
<div style="left:1616.8999999999999px;top:863.5px;width:2.5px;height:1.3px;background:#a8a8a8"></div>
<div class="t" style="left:1575.40px;top:894.44px;width:40px;text-align:right;font-size:10.5px;line-height:13.12px;color:#a8a8a8;">-24</div>
<div style="left:1616.8999999999999px;top:900.5px;width:2.5px;height:1.3px;background:#a8a8a8"></div>
<div class="t" style="left:1575.40px;top:930.84px;width:40px;text-align:right;font-size:10.5px;line-height:13.12px;color:#a8a8a8;">-36</div>
<div style="left:1616.8999999999999px;top:936.5px;width:2.5px;height:1.3px;background:#a8a8a8"></div>
<div class="t" style="left:1575.40px;top:967.94px;width:40px;text-align:right;font-size:10.5px;line-height:13.12px;color:#a8a8a8;">-48</div>
<div style="left:1616.8999999999999px;top:973.5px;width:2.5px;height:1.3px;background:#a8a8a8"></div>
<div class="t" style="left:1559.40px;top:1049.44px;width:110px;text-align:center;font-size:14.5px;line-height:18.12px;color:#dcdcdc;">Dante Out7</div>
<div style="left:1695.4px;top:420px;width:121.7px;height:648.5px;background:#1e1e20;border-radius:4px 4px 0 0"></div>
<div style="left:1700.4px;top:697.7px;width:111.6px;height:21.3px;background:#000"></div>
<div class="t" style="left:1700.70px;top:700.59px;width:111px;text-align:center;font-size:12.5px;line-height:15.62px;color:#d8d8d8;">WMIC1_InRM</div>
<div style="left:1717.2px;top:728px;width:77.7px;height:8.7px;background:#3c3c3e"></div>
<div style="left:1713.4px;top:646px;width:86.5px;height:42.75px;background:#363638;border-radius:22px"></div>
<svg width="2400" height="1200" viewBox="0 0 2400 1200"><rect x="1730.7" y="656.9" width="7" height="14.5" rx="3.5" fill="#d6d6d6"/><path d="M1726.9 666.5 A7.4 8.2 0 0 0 1741.7 666.5" fill="none" stroke="#d6d6d6" stroke-width="1.8"/><path d="M1734.2 674.3 V678.5" stroke="#d6d6d6" stroke-width="2.2"/></svg>
<svg width="2400" height="1200" viewBox="0 0 2400 1200"><g fill="none" stroke="#d0d0d0" stroke-width="2.2"><path d="M1774.6000000000001 665.7 V662 A5.9 5.9 0 0 1 1786.3000000000002 662 V665.7"/><path d="M1774.6000000000001 668 V672.4 A5.9 5.9 0 0 0 1786.3000000000002 672.4 V668"/><path d="M1780.1000000000001 662.5 V672.5"/><path d="M1772.4 657.6 L1788.7 673"/></g></svg>
<div style="left:1737.4px;top:767.3px;width:7px;height:213.3px;background:#000;border-radius:2px"></div>
<div class="t" style="left:1691.90px;top:766.14px;width:40px;text-align:right;font-size:10.5px;line-height:13.12px;color:#a8a8a8;">PK</div>
<div style="left:1733.4px;top:772.5px;width:2.5px;height:1.3px;background:#a8a8a8"></div>
<div class="t" style="left:1691.90px;top:784.44px;width:40px;text-align:right;font-size:10.5px;line-height:13.12px;color:#a8a8a8;">12</div>
<div style="left:1733.4px;top:790.5px;width:2.5px;height:1.3px;background:#a8a8a8"></div>
<div class="t" style="left:1691.90px;top:802.94px;width:40px;text-align:right;font-size:10.5px;line-height:13.12px;color:#a8a8a8;">6</div>
<div style="left:1733.4px;top:809.5px;width:2.5px;height:1.3px;background:#a8a8a8"></div>
<div class="t" style="left:1691.90px;top:820.94px;width:40px;text-align:right;font-size:10.5px;line-height:13.12px;color:#c8c8c8;font-weight:bold">0</div>
<div style="left:1733.4px;top:827.5px;width:2.5px;height:1.3px;background:#a8a8a8"></div>
<div class="t" style="left:1691.90px;top:839.44px;width:40px;text-align:right;font-size:10.5px;line-height:13.12px;color:#a8a8a8;">-6</div>
<div style="left:1733.4px;top:845.5px;width:2.5px;height:1.3px;background:#a8a8a8"></div>
<div class="t" style="left:1691.90px;top:857.44px;width:40px;text-align:right;font-size:10.5px;line-height:13.12px;color:#a8a8a8;">-12</div>
<div style="left:1733.4px;top:863.5px;width:2.5px;height:1.3px;background:#a8a8a8"></div>
<div class="t" style="left:1691.90px;top:894.44px;width:40px;text-align:right;font-size:10.5px;line-height:13.12px;color:#a8a8a8;">-24</div>
<div style="left:1733.4px;top:900.5px;width:2.5px;height:1.3px;background:#a8a8a8"></div>
<div class="t" style="left:1691.90px;top:930.84px;width:40px;text-align:right;font-size:10.5px;line-height:13.12px;color:#a8a8a8;">-36</div>
<div style="left:1733.4px;top:936.5px;width:2.5px;height:1.3px;background:#a8a8a8"></div>
<div class="t" style="left:1691.90px;top:967.94px;width:40px;text-align:right;font-size:10.5px;line-height:13.12px;color:#a8a8a8;">-48</div>
<div style="left:1733.4px;top:973.5px;width:2.5px;height:1.3px;background:#a8a8a8"></div>
<div style="left:1770.4px;top:756px;width:8.5px;height:1.8px;background:#9c9c9c"></div>
<div style="left:1785.9px;top:756px;width:8.5px;height:1.8px;background:#9c9c9c"></div>
<div class="t" style="left:1738.40px;top:750.74px;width:30px;text-align:right;font-size:10.5px;line-height:13.12px;color:#bbb;">10</div>
<div class="t" style="left:1738.40px;top:796.44px;width:30px;text-align:right;font-size:10.5px;line-height:13.12px;color:#bbb;">0</div>
<div style="left:1770.4px;top:848px;width:8.5px;height:1.8px;background:#9c9c9c"></div>
<div style="left:1785.9px;top:848px;width:8.5px;height:1.8px;background:#9c9c9c"></div>
<div class="t" style="left:1738.40px;top:842.44px;width:30px;text-align:right;font-size:10.5px;line-height:13.12px;color:#bbb;">10</div>
<div style="left:1770.4px;top:894px;width:8.5px;height:1.8px;background:#9c9c9c"></div>
<div style="left:1785.9px;top:894px;width:8.5px;height:1.8px;background:#9c9c9c"></div>
<div class="t" style="left:1738.40px;top:888.14px;width:30px;text-align:right;font-size:10.5px;line-height:13.12px;color:#bbb;">20</div>
<div style="left:1770.4px;top:939px;width:8.5px;height:1.8px;background:#9c9c9c"></div>
<div style="left:1785.9px;top:939px;width:8.5px;height:1.8px;background:#9c9c9c"></div>
<div class="t" style="left:1738.40px;top:933.84px;width:30px;text-align:right;font-size:10.5px;line-height:13.12px;color:#bbb;">30</div>
<div style="left:1770.4px;top:962px;width:8.5px;height:1.8px;background:#9c9c9c"></div>
<div style="left:1785.9px;top:962px;width:8.5px;height:1.8px;background:#9c9c9c"></div>
<div class="t" style="left:1738.40px;top:956.24px;width:30px;text-align:right;font-size:10.5px;line-height:13.12px;color:#bbb;">40</div>
<div style="left:1770.4px;top:983px;width:8.5px;height:1.8px;background:#9c9c9c"></div>
<div style="left:1785.9px;top:983px;width:8.5px;height:1.8px;background:#9c9c9c"></div>
<div class="t" style="left:1738.40px;top:976.80px;width:30px;text-align:right;font-size:12px;line-height:15.0px;color:#bbb;">&#8734;</div>
<div style="left:1775.4px;top:765px;width:3.5px;height:1.8px;background:#9c9c9c"></div>
<div style="left:1785.9px;top:765px;width:3.5px;height:1.8px;background:#9c9c9c"></div>
<div style="left:1775.4px;top:857px;width:3.5px;height:1.8px;background:#9c9c9c"></div>
<div style="left:1785.9px;top:857px;width:3.5px;height:1.8px;background:#9c9c9c"></div>
<div style="left:1775.4px;top:903px;width:3.5px;height:1.8px;background:#9c9c9c"></div>
<div style="left:1785.9px;top:903px;width:3.5px;height:1.8px;background:#9c9c9c"></div>
<div style="left:1775.4px;top:775px;width:3.5px;height:1.8px;background:#9c9c9c"></div>
<div style="left:1785.9px;top:775px;width:3.5px;height:1.8px;background:#9c9c9c"></div>
<div style="left:1775.4px;top:866px;width:3.5px;height:1.8px;background:#9c9c9c"></div>
<div style="left:1785.9px;top:866px;width:3.5px;height:1.8px;background:#9c9c9c"></div>
<div style="left:1775.4px;top:912px;width:3.5px;height:1.8px;background:#9c9c9c"></div>
<div style="left:1785.9px;top:912px;width:3.5px;height:1.8px;background:#9c9c9c"></div>
<div style="left:1775.4px;top:830px;width:3.5px;height:1.8px;background:#9c9c9c"></div>
<div style="left:1785.9px;top:830px;width:3.5px;height:1.8px;background:#9c9c9c"></div>
<div style="left:1775.4px;top:875px;width:3.5px;height:1.8px;background:#9c9c9c"></div>
<div style="left:1785.9px;top:875px;width:3.5px;height:1.8px;background:#9c9c9c"></div>
<div style="left:1775.4px;top:921px;width:3.5px;height:1.8px;background:#9c9c9c"></div>
<div style="left:1785.9px;top:921px;width:3.5px;height:1.8px;background:#9c9c9c"></div>
<div style="left:1775.4px;top:839px;width:3.5px;height:1.8px;background:#9c9c9c"></div>
<div style="left:1785.9px;top:839px;width:3.5px;height:1.8px;background:#9c9c9c"></div>
<div style="left:1775.4px;top:885px;width:3.5px;height:1.8px;background:#9c9c9c"></div>
<div style="left:1785.9px;top:885px;width:3.5px;height:1.8px;background:#9c9c9c"></div>
<div style="left:1775.4px;top:930px;width:3.5px;height:1.8px;background:#9c9c9c"></div>
<div style="left:1785.9px;top:930px;width:3.5px;height:1.8px;background:#9c9c9c"></div>
<div style="left:1775.4px;top:951px;width:3.5px;height:1.8px;background:#9c9c9c"></div>
<div style="left:1785.9px;top:951px;width:3.5px;height:1.8px;background:#9c9c9c"></div>
<div style="left:1775.4px;top:973px;width:3.5px;height:1.8px;background:#9c9c9c"></div>
<div style="left:1785.9px;top:973px;width:3.5px;height:1.8px;background:#9c9c9c"></div>
<div style="left:1779.7px;top:752px;width:5.4px;height:70px;background:#000"></div>
<div style="left:1779.7px;top:822px;width:5.4px;height:173.5px;background:#00b4ee"></div>
<div style="left:1771.1000000000001px;top:783.7px;width:22.3px;height:37.6px;background:#c4c4c4;border:1.5px solid #111;border-radius:4px"></div>
<div style="left:1771.9px;top:801.5px;width:20.7px;height:2.3px;background:#1a1a1a"></div>
<div style="left:1751.2px;top:1004.3px;width:56px;height:25.3px;background:#000"></div>
<div class="t" style="left:1751.20px;top:1005.75px;width:56px;text-align:center;font-size:18px;line-height:22.5px;color:#1684c6;">0.0</div>
<div class="t" style="left:1768.90px;top:1033.25px;width:40px;text-align:right;font-size:14px;line-height:17.5px;color:#ddd;">dB</div>
<div style="left:1818.7px;top:420px;width:121.7px;height:648.5px;background:#1e1e20;border-radius:4px 4px 0 0"></div>
<div style="left:1823.7px;top:697.7px;width:111.6px;height:21.3px;background:#000"></div>
<div class="t" style="left:1824.00px;top:700.59px;width:111px;text-align:center;font-size:12.5px;line-height:15.62px;color:#d8d8d8;">WMIC2_InRM</div>
<div style="left:1840.5px;top:728px;width:77.7px;height:8.7px;background:#3c3c3e"></div>
<div style="left:1836.7px;top:646px;width:86.5px;height:42.75px;background:#363638;border-radius:22px"></div>
<svg width="2400" height="1200" viewBox="0 0 2400 1200"><rect x="1854.0" y="656.9" width="7" height="14.5" rx="3.5" fill="#d6d6d6"/><path d="M1850.2 666.5 A7.4 8.2 0 0 0 1865.0 666.5" fill="none" stroke="#d6d6d6" stroke-width="1.8"/><path d="M1857.5 674.3 V678.5" stroke="#d6d6d6" stroke-width="2.2"/></svg>
<svg width="2400" height="1200" viewBox="0 0 2400 1200"><g fill="none" stroke="#d0d0d0" stroke-width="2.2"><path d="M1897.9 665.7 V662 A5.9 5.9 0 0 1 1909.6000000000001 662 V665.7"/><path d="M1897.9 668 V672.4 A5.9 5.9 0 0 0 1909.6000000000001 672.4 V668"/><path d="M1903.4 662.5 V672.5"/><path d="M1895.7 657.6 L1912.0 673"/></g></svg>
<div style="left:1860.7px;top:767.3px;width:7px;height:213.3px;background:#000;border-radius:2px"></div>
<div class="t" style="left:1815.20px;top:766.14px;width:40px;text-align:right;font-size:10.5px;line-height:13.12px;color:#a8a8a8;">PK</div>
<div style="left:1856.7px;top:772.5px;width:2.5px;height:1.3px;background:#a8a8a8"></div>
<div class="t" style="left:1815.20px;top:784.44px;width:40px;text-align:right;font-size:10.5px;line-height:13.12px;color:#a8a8a8;">12</div>
<div style="left:1856.7px;top:790.5px;width:2.5px;height:1.3px;background:#a8a8a8"></div>
<div class="t" style="left:1815.20px;top:802.94px;width:40px;text-align:right;font-size:10.5px;line-height:13.12px;color:#a8a8a8;">6</div>
<div style="left:1856.7px;top:809.5px;width:2.5px;height:1.3px;background:#a8a8a8"></div>
<div class="t" style="left:1815.20px;top:820.94px;width:40px;text-align:right;font-size:10.5px;line-height:13.12px;color:#c8c8c8;font-weight:bold">0</div>
<div style="left:1856.7px;top:827.5px;width:2.5px;height:1.3px;background:#a8a8a8"></div>
<div class="t" style="left:1815.20px;top:839.44px;width:40px;text-align:right;font-size:10.5px;line-height:13.12px;color:#a8a8a8;">-6</div>
<div style="left:1856.7px;top:845.5px;width:2.5px;height:1.3px;background:#a8a8a8"></div>
<div class="t" style="left:1815.20px;top:857.44px;width:40px;text-align:right;font-size:10.5px;line-height:13.12px;color:#a8a8a8;">-12</div>
<div style="left:1856.7px;top:863.5px;width:2.5px;height:1.3px;background:#a8a8a8"></div>
<div class="t" style="left:1815.20px;top:894.44px;width:40px;text-align:right;font-size:10.5px;line-height:13.12px;color:#a8a8a8;">-24</div>
<div style="left:1856.7px;top:900.5px;width:2.5px;height:1.3px;background:#a8a8a8"></div>
<div class="t" style="left:1815.20px;top:930.84px;width:40px;text-align:right;font-size:10.5px;line-height:13.12px;color:#a8a8a8;">-36</div>
<div style="left:1856.7px;top:936.5px;width:2.5px;height:1.3px;background:#a8a8a8"></div>
<div class="t" style="left:1815.20px;top:967.94px;width:40px;text-align:right;font-size:10.5px;line-height:13.12px;color:#a8a8a8;">-48</div>
<div style="left:1856.7px;top:973.5px;width:2.5px;height:1.3px;background:#a8a8a8"></div>
<div style="left:1893.7px;top:756px;width:8.5px;height:1.8px;background:#9c9c9c"></div>
<div style="left:1909.2px;top:756px;width:8.5px;height:1.8px;background:#9c9c9c"></div>
<div class="t" style="left:1861.70px;top:750.74px;width:30px;text-align:right;font-size:10.5px;line-height:13.12px;color:#bbb;">10</div>
<div class="t" style="left:1861.70px;top:796.44px;width:30px;text-align:right;font-size:10.5px;line-height:13.12px;color:#bbb;">0</div>
<div style="left:1893.7px;top:848px;width:8.5px;height:1.8px;background:#9c9c9c"></div>
<div style="left:1909.2px;top:848px;width:8.5px;height:1.8px;background:#9c9c9c"></div>
<div class="t" style="left:1861.70px;top:842.44px;width:30px;text-align:right;font-size:10.5px;line-height:13.12px;color:#bbb;">10</div>
<div style="left:1893.7px;top:894px;width:8.5px;height:1.8px;background:#9c9c9c"></div>
<div style="left:1909.2px;top:894px;width:8.5px;height:1.8px;background:#9c9c9c"></div>
<div class="t" style="left:1861.70px;top:888.14px;width:30px;text-align:right;font-size:10.5px;line-height:13.12px;color:#bbb;">20</div>
<div style="left:1893.7px;top:939px;width:8.5px;height:1.8px;background:#9c9c9c"></div>
<div style="left:1909.2px;top:939px;width:8.5px;height:1.8px;background:#9c9c9c"></div>
<div class="t" style="left:1861.70px;top:933.84px;width:30px;text-align:right;font-size:10.5px;line-height:13.12px;color:#bbb;">30</div>
<div style="left:1893.7px;top:962px;width:8.5px;height:1.8px;background:#9c9c9c"></div>
<div style="left:1909.2px;top:962px;width:8.5px;height:1.8px;background:#9c9c9c"></div>
<div class="t" style="left:1861.70px;top:956.24px;width:30px;text-align:right;font-size:10.5px;line-height:13.12px;color:#bbb;">40</div>
<div style="left:1893.7px;top:983px;width:8.5px;height:1.8px;background:#9c9c9c"></div>
<div style="left:1909.2px;top:983px;width:8.5px;height:1.8px;background:#9c9c9c"></div>
<div class="t" style="left:1861.70px;top:976.80px;width:30px;text-align:right;font-size:12px;line-height:15.0px;color:#bbb;">&#8734;</div>
<div style="left:1898.7px;top:765px;width:3.5px;height:1.8px;background:#9c9c9c"></div>
<div style="left:1909.2px;top:765px;width:3.5px;height:1.8px;background:#9c9c9c"></div>
<div style="left:1898.7px;top:857px;width:3.5px;height:1.8px;background:#9c9c9c"></div>
<div style="left:1909.2px;top:857px;width:3.5px;height:1.8px;background:#9c9c9c"></div>
<div style="left:1898.7px;top:903px;width:3.5px;height:1.8px;background:#9c9c9c"></div>
<div style="left:1909.2px;top:903px;width:3.5px;height:1.8px;background:#9c9c9c"></div>
<div style="left:1898.7px;top:775px;width:3.5px;height:1.8px;background:#9c9c9c"></div>
<div style="left:1909.2px;top:775px;width:3.5px;height:1.8px;background:#9c9c9c"></div>
<div style="left:1898.7px;top:866px;width:3.5px;height:1.8px;background:#9c9c9c"></div>
<div style="left:1909.2px;top:866px;width:3.5px;height:1.8px;background:#9c9c9c"></div>
<div style="left:1898.7px;top:912px;width:3.5px;height:1.8px;background:#9c9c9c"></div>
<div style="left:1909.2px;top:912px;width:3.5px;height:1.8px;background:#9c9c9c"></div>
<div style="left:1898.7px;top:830px;width:3.5px;height:1.8px;background:#9c9c9c"></div>
<div style="left:1909.2px;top:830px;width:3.5px;height:1.8px;background:#9c9c9c"></div>
<div style="left:1898.7px;top:875px;width:3.5px;height:1.8px;background:#9c9c9c"></div>
<div style="left:1909.2px;top:875px;width:3.5px;height:1.8px;background:#9c9c9c"></div>
<div style="left:1898.7px;top:921px;width:3.5px;height:1.8px;background:#9c9c9c"></div>
<div style="left:1909.2px;top:921px;width:3.5px;height:1.8px;background:#9c9c9c"></div>
<div style="left:1898.7px;top:839px;width:3.5px;height:1.8px;background:#9c9c9c"></div>
<div style="left:1909.2px;top:839px;width:3.5px;height:1.8px;background:#9c9c9c"></div>
<div style="left:1898.7px;top:885px;width:3.5px;height:1.8px;background:#9c9c9c"></div>
<div style="left:1909.2px;top:885px;width:3.5px;height:1.8px;background:#9c9c9c"></div>
<div style="left:1898.7px;top:930px;width:3.5px;height:1.8px;background:#9c9c9c"></div>
<div style="left:1909.2px;top:930px;width:3.5px;height:1.8px;background:#9c9c9c"></div>
<div style="left:1898.7px;top:951px;width:3.5px;height:1.8px;background:#9c9c9c"></div>
<div style="left:1909.2px;top:951px;width:3.5px;height:1.8px;background:#9c9c9c"></div>
<div style="left:1898.7px;top:973px;width:3.5px;height:1.8px;background:#9c9c9c"></div>
<div style="left:1909.2px;top:973px;width:3.5px;height:1.8px;background:#9c9c9c"></div>
<div style="left:1903.0px;top:752px;width:5.4px;height:70px;background:#000"></div>
<div style="left:1903.0px;top:822px;width:5.4px;height:173.5px;background:#00b4ee"></div>
<div style="left:1894.4px;top:783.7px;width:22.3px;height:37.6px;background:#c4c4c4;border:1.5px solid #111;border-radius:4px"></div>
<div style="left:1895.2px;top:801.5px;width:20.7px;height:2.3px;background:#1a1a1a"></div>
<div style="left:1874.5px;top:1004.3px;width:56px;height:25.3px;background:#000"></div>
<div class="t" style="left:1874.50px;top:1005.75px;width:56px;text-align:center;font-size:18px;line-height:22.5px;color:#1684c6;">0.0</div>
<div class="t" style="left:1892.20px;top:1033.25px;width:40px;text-align:right;font-size:14px;line-height:17.5px;color:#ddd;">dB</div>
<div style="left:1942px;top:420px;width:121.7px;height:648.5px;background:#1e1e20;border-radius:4px 4px 0 0"></div>
<div style="left:1947px;top:697.7px;width:111.6px;height:21.3px;background:#000"></div>
<div class="t" style="left:1947.30px;top:700.59px;width:111px;text-align:center;font-size:12.5px;line-height:15.62px;color:#d8d8d8;">WMIC-MIX_InRM</div>
<div style="left:1963.8px;top:728px;width:77.7px;height:8.7px;background:#3c3c3e"></div>
<div style="left:2009.3px;top:767.3px;width:7px;height:213.3px;background:#000;border-radius:2px"></div>
<div class="t" style="left:1963.80px;top:766.14px;width:40px;text-align:right;font-size:10.5px;line-height:13.12px;color:#a8a8a8;">PK</div>
<div style="left:2005.3px;top:772.5px;width:2.5px;height:1.3px;background:#a8a8a8"></div>
<div class="t" style="left:1963.80px;top:784.44px;width:40px;text-align:right;font-size:10.5px;line-height:13.12px;color:#a8a8a8;">12</div>
<div style="left:2005.3px;top:790.5px;width:2.5px;height:1.3px;background:#a8a8a8"></div>
<div class="t" style="left:1963.80px;top:802.94px;width:40px;text-align:right;font-size:10.5px;line-height:13.12px;color:#a8a8a8;">6</div>
<div style="left:2005.3px;top:809.5px;width:2.5px;height:1.3px;background:#a8a8a8"></div>
<div class="t" style="left:1963.80px;top:820.94px;width:40px;text-align:right;font-size:10.5px;line-height:13.12px;color:#c8c8c8;font-weight:bold">0</div>
<div style="left:2005.3px;top:827.5px;width:2.5px;height:1.3px;background:#a8a8a8"></div>
<div class="t" style="left:1963.80px;top:839.44px;width:40px;text-align:right;font-size:10.5px;line-height:13.12px;color:#a8a8a8;">-6</div>
<div style="left:2005.3px;top:845.5px;width:2.5px;height:1.3px;background:#a8a8a8"></div>
<div class="t" style="left:1963.80px;top:857.44px;width:40px;text-align:right;font-size:10.5px;line-height:13.12px;color:#a8a8a8;">-12</div>
<div style="left:2005.3px;top:863.5px;width:2.5px;height:1.3px;background:#a8a8a8"></div>
<div class="t" style="left:1963.80px;top:894.44px;width:40px;text-align:right;font-size:10.5px;line-height:13.12px;color:#a8a8a8;">-24</div>
<div style="left:2005.3px;top:900.5px;width:2.5px;height:1.3px;background:#a8a8a8"></div>
<div class="t" style="left:1963.80px;top:930.84px;width:40px;text-align:right;font-size:10.5px;line-height:13.12px;color:#a8a8a8;">-36</div>
<div style="left:2005.3px;top:936.5px;width:2.5px;height:1.3px;background:#a8a8a8"></div>
<div class="t" style="left:1963.80px;top:967.94px;width:40px;text-align:right;font-size:10.5px;line-height:13.12px;color:#a8a8a8;">-48</div>
<div style="left:2005.3px;top:973.5px;width:2.5px;height:1.3px;background:#a8a8a8"></div>
<div class="t" style="left:1947.80px;top:1049.44px;width:110px;text-align:center;font-size:14.5px;line-height:18.12px;color:#dcdcdc;">Dante Out8</div>
<svg width="2400" height="1200" viewBox="0 0 2400 1200"><path d="M715.84 322.66 A36 36 0 1 1 766.76 322.66" fill="none" stroke="#000" stroke-width="6"/><path d="M717.21 323.95 A36 36 0 0 1 714.55 321.29" fill="none" stroke="#ff1a1a" stroke-width="2.5" transform="rotate(0)"/><circle cx="741.3" cy="297.2" r="31.1" fill="none" stroke="#363638" stroke-width="3.9"/><circle cx="741.3" cy="297.2" r="29.15" fill="#000"/></svg>
<div class="t" style="left:701.30px;top:279.95px;width:80px;text-align:center;font-size:22px;line-height:27.5px;color:#c4863c;font-weight:bold">0.0</div>
<div class="t" style="left:721.30px;top:308.95px;width:40px;text-align:center;font-size:10px;line-height:12.5px;color:#ccc;">dB</div>
<div class="t" style="left:691.30px;top:329.12px;width:100px;text-align:center;font-size:19px;line-height:23.75px;color:#dedede;">INPUT</div>
<svg width="2400" height="1200" viewBox="0 0 2400 1200"><path d="M851.24 322.66 A36 36 0 1 1 902.16 322.66" fill="none" stroke="#000" stroke-width="6"/><path d="M851.24 322.66 A36 36 0 0 1 886.02 262.43" fill="none" stroke="#d08a32" stroke-width="6"/><path d="M852.61 323.95 A36 36 0 0 1 849.95 321.29" fill="none" stroke="#ff1a1a" stroke-width="2.5" transform="rotate(0)"/><circle cx="876.7" cy="297.2" r="31.1" fill="none" stroke="#363638" stroke-width="3.9"/><circle cx="876.7" cy="297.2" r="29.15" fill="#000"/></svg>
<div class="t" style="left:836.70px;top:279.95px;width:80px;text-align:center;font-size:22px;line-height:27.5px;color:#c4863c;font-weight:bold">250</div>
<div class="t" style="left:856.70px;top:308.95px;width:40px;text-align:center;font-size:10px;line-height:12.5px;color:#ccc;">Hz</div>
<div class="ob" style="left:854px;top:336.8px;width:42px;height:27.5px;"><div class="t" style="left:0px;top:2.44px;font-size:16.5px;line-height:20.62px;color:#fff;width:40px;text-align:center">HPF</div></div>
<svg width="2400" height="1200" viewBox="0 0 2400 1200"><path d="M1591.24 322.66 A36 36 0 1 1 1642.16 322.66" fill="none" stroke="#000" stroke-width="6"/><path d="M1591.24 322.66 A36 36 0 0 1 1585.52 279.20" fill="none" stroke="#d08a32" stroke-width="6"/><path d="M1592.61 323.95 A36 36 0 0 1 1589.95 321.29" fill="none" stroke="#ff1a1a" stroke-width="2.5" transform="rotate(0)"/><circle cx="1616.7" cy="297.2" r="31.1" fill="none" stroke="#363638" stroke-width="3.9"/><circle cx="1616.7" cy="297.2" r="29.15" fill="#000"/></svg>
<div class="t" style="left:1576.70px;top:279.95px;width:80px;text-align:center;font-size:22px;line-height:27.5px;color:#c4863c;font-weight:bold">0.0</div>
<div class="t" style="left:1596.70px;top:308.95px;width:40px;text-align:center;font-size:10px;line-height:12.5px;color:#ccc;">dB</div>
<div class="t" style="left:1566.70px;top:329.12px;width:100px;text-align:center;font-size:19px;line-height:23.75px;color:#dedede;">INPUT</div>
<svg width="2400" height="1200" viewBox="0 0 2400 1200"><path d="M1805.24 322.66 A36 36 0 1 1 1856.16 322.66" fill="none" stroke="#000" stroke-width="6"/><path d="M1805.24 322.66 A36 36 0 0 1 1799.52 279.20" fill="none" stroke="#d08a32" stroke-width="6"/><path d="M1806.61 323.95 A36 36 0 0 1 1803.95 321.29" fill="none" stroke="#ff1a1a" stroke-width="2.5" transform="rotate(0)"/><circle cx="1830.7" cy="297.2" r="31.1" fill="none" stroke="#363638" stroke-width="3.9"/><circle cx="1830.7" cy="297.2" r="29.15" fill="#000"/></svg>
<div class="t" style="left:1790.70px;top:279.95px;width:80px;text-align:center;font-size:22px;line-height:27.5px;color:#c4863c;font-weight:bold">0.0</div>
<div class="t" style="left:1810.70px;top:308.95px;width:40px;text-align:center;font-size:10px;line-height:12.5px;color:#ccc;">dB</div>
<div class="t" style="left:1780.70px;top:329.12px;width:100px;text-align:center;font-size:19px;line-height:23.75px;color:#dedede;">INPUT</div>
<div class="t" style="left:1473.5px;top:253.88px;font-size:17.8px;line-height:22.25px;color:#dcdcdc;">WLMIC1</div>
<div class="t" style="left:1687.5px;top:253.88px;font-size:17.8px;line-height:22.25px;color:#dcdcdc;">WLMIC2</div>
<div style="left:1494px;top:274.8px;width:10px;height:3px;background:#555"></div>
<div style="left:1708.5px;top:274.8px;width:10px;height:3px;background:#555"></div>
<svg width="2400" height="1200" viewBox="0 0 2400 1200"><g fill="none" stroke="#00b4ee"><rect x="496.25" y="541.15" width="116" height="87.5" stroke-width="6.8"/><rect x="496.25" y="636.6" width="116" height="59.5" stroke-width="6.8"/><rect x="811.15" y="239.15" width="128.7" height="137.5" stroke-width="4.3"/><rect x="1006.3" y="441.3" width="115.4" height="111.1" stroke-width="4.6"/><path d="M1006 481.8 H1122" stroke-width="4.6"/><path d="M74.5 526 V584.5 H498" stroke-width="5"/><path d="M74.5 1148 V666.5 H498" stroke-width="5"/><path d="M791 28.75 H875.75 V238" stroke-width="5"/><path d="M1213 28.75 H1063.75 V441" stroke-width="4.6"/><path d="M1121 516.3 H2192.75" stroke-width="4.8"/></g><g fill="#00b4ee"><circle cx="498" cy="584.6" r="4.2"/><circle cx="498" cy="666.3" r="4.2"/><circle cx="875.75" cy="238" r="4.2"/><circle cx="1064" cy="441" r="4.2"/><circle cx="1121.5" cy="516.3" r="4.2"/><circle cx="74.5" cy="502" r="24.5"/><circle cx="678" cy="29" r="24.5"/><circle cx="1213" cy="29" r="24.5"/><circle cx="2241.2" cy="516.4" r="24.5"/><circle cx="2241.2" cy="576.2" r="24.5"/><circle cx="2241.2" cy="634.9" r="24.5"/><circle cx="74.5" cy="1172" r="24.5"/></g></svg>
<div class="t" style="left:653.00px;top:5.50px;width:50px;text-align:center;font-size:40px;line-height:50.0px;color:#fff;">2</div>
<div class="t" style="left:1188.00px;top:5.50px;width:50px;text-align:center;font-size:40px;line-height:50.0px;color:#fff;">3</div>
<div class="t" style="left:2216.20px;top:492.90px;width:50px;text-align:center;font-size:40px;line-height:50.0px;color:#fff;">4</div>
<div class="t" style="left:2216.20px;top:552.70px;width:50px;text-align:center;font-size:40px;line-height:50.0px;color:#fff;">5</div>
<div class="t" style="left:2216.20px;top:611.40px;width:50px;text-align:center;font-size:40px;line-height:50.0px;color:#fff;">6</div>
<div class="t" style="left:49.50px;top:1148.50px;width:50px;text-align:center;font-size:40px;line-height:50.0px;color:#fff;">7</div>
<svg width="2400" height="1200" viewBox="0 0 2400 1200"><path d="M67.2 497.5 L76.2 490 V518" fill="none" stroke="#fff" stroke-width="4.2" stroke-linejoin="miter"/></svg>
<div class="t" style="left:112px;top:479.50px;font-size:36px;line-height:45.0px;color:#231815;-webkit-text-stroke:1.3px #231815;transform:scaleX(0.92);transform-origin:0 50%">PEQ</div>
<div class="t" style="left:712px;top:6.50px;font-size:36px;line-height:45.0px;color:#231815;-webkit-text-stroke:1.3px #231815;transform:scaleX(0.92);transform-origin:0 50%">HPF</div>
<div class="t" style="left:1249px;top:6.50px;font-size:36px;line-height:45.0px;color:#231815;-webkit-text-stroke:1.3px #231815;transform:scaleX(0.93);transform-origin:0 50%">DUCKER</div>
<div class="t" style="left:2272.4px;top:495.50px;font-size:36px;line-height:45.0px;color:#231815;-webkit-text-stroke:1.3px #231815;transform:scaleX(0.94);transform-origin:0 50%">AEC</div>
<div class="t" style="left:2272.4px;top:554.00px;font-size:36px;line-height:45.0px;color:#231815;-webkit-text-stroke:1.3px #231815;transform:scaleX(0.94);transform-origin:0 50%">AGC</div>
<div class="t" style="left:2272.4px;top:612.00px;font-size:36px;line-height:45.0px;color:#231815;-webkit-text-stroke:1.3px #231815;transform:scaleX(0.94);transform-origin:0 50%">DNR</div>
<svg width="2400" height="1200" viewBox="0 0 2400 1200"><g fill="none" stroke="#231815" stroke-width="4"><path d="M121 1163.8 Q130 1164.5 136.3 1167.6 M121 1172.4 Q129 1173.5 135 1176.6 M118.8 1180.6 Q129 1182 138.3 1187.3"/><path d="M154 1171.8 H168.5 V1186 M151.2 1186 H175"/><path d="M184 1175 H210"/><path d="M228.8 1161.3 V1188.8 M230.5 1170.2 L242.5 1177.3"/><path d="M293.3 1163.8 Q302.3 1164.5 308.6 1167.6 M293.3 1172.4 Q301.3 1173.5 307.3 1176.6 M291.1 1180.6 Q301.3 1182 310.6 1187.3"/><path d="M326.3 1171.8 H340.8 V1186 M323.5 1186 H347.3"/><path d="M356.3 1175 H382.3"/><path d="M401.1 1161.3 V1188.8 M402.8 1170.2 L414.8 1177.3"/><path d="M251.2 1183.5 L259 1191.2"/><path d="M437.5 1160.8 Q432 1170 425.8 1176.5 M433.5 1167.5 H448.5 Q444 1182 427.6 1189.2"/><path d="M447.5 1158.5 L449.5 1162 M451.5 1157.5 L453.5 1161" stroke-width="1.6"/><path d="M466 1163 V1177 Q465 1184 457.8 1188.5 M476.3 1162 V1185.5 Q482 1182 488.5 1172.5"/><path d="M494 1175 H520"/><path d="M530 1165.3 H551.5 Q548 1180 533.8 1188"/><circle cx="555.2" cy="1161.8" r="2.6" stroke-width="1.6"/></g></svg>
</body></html>
